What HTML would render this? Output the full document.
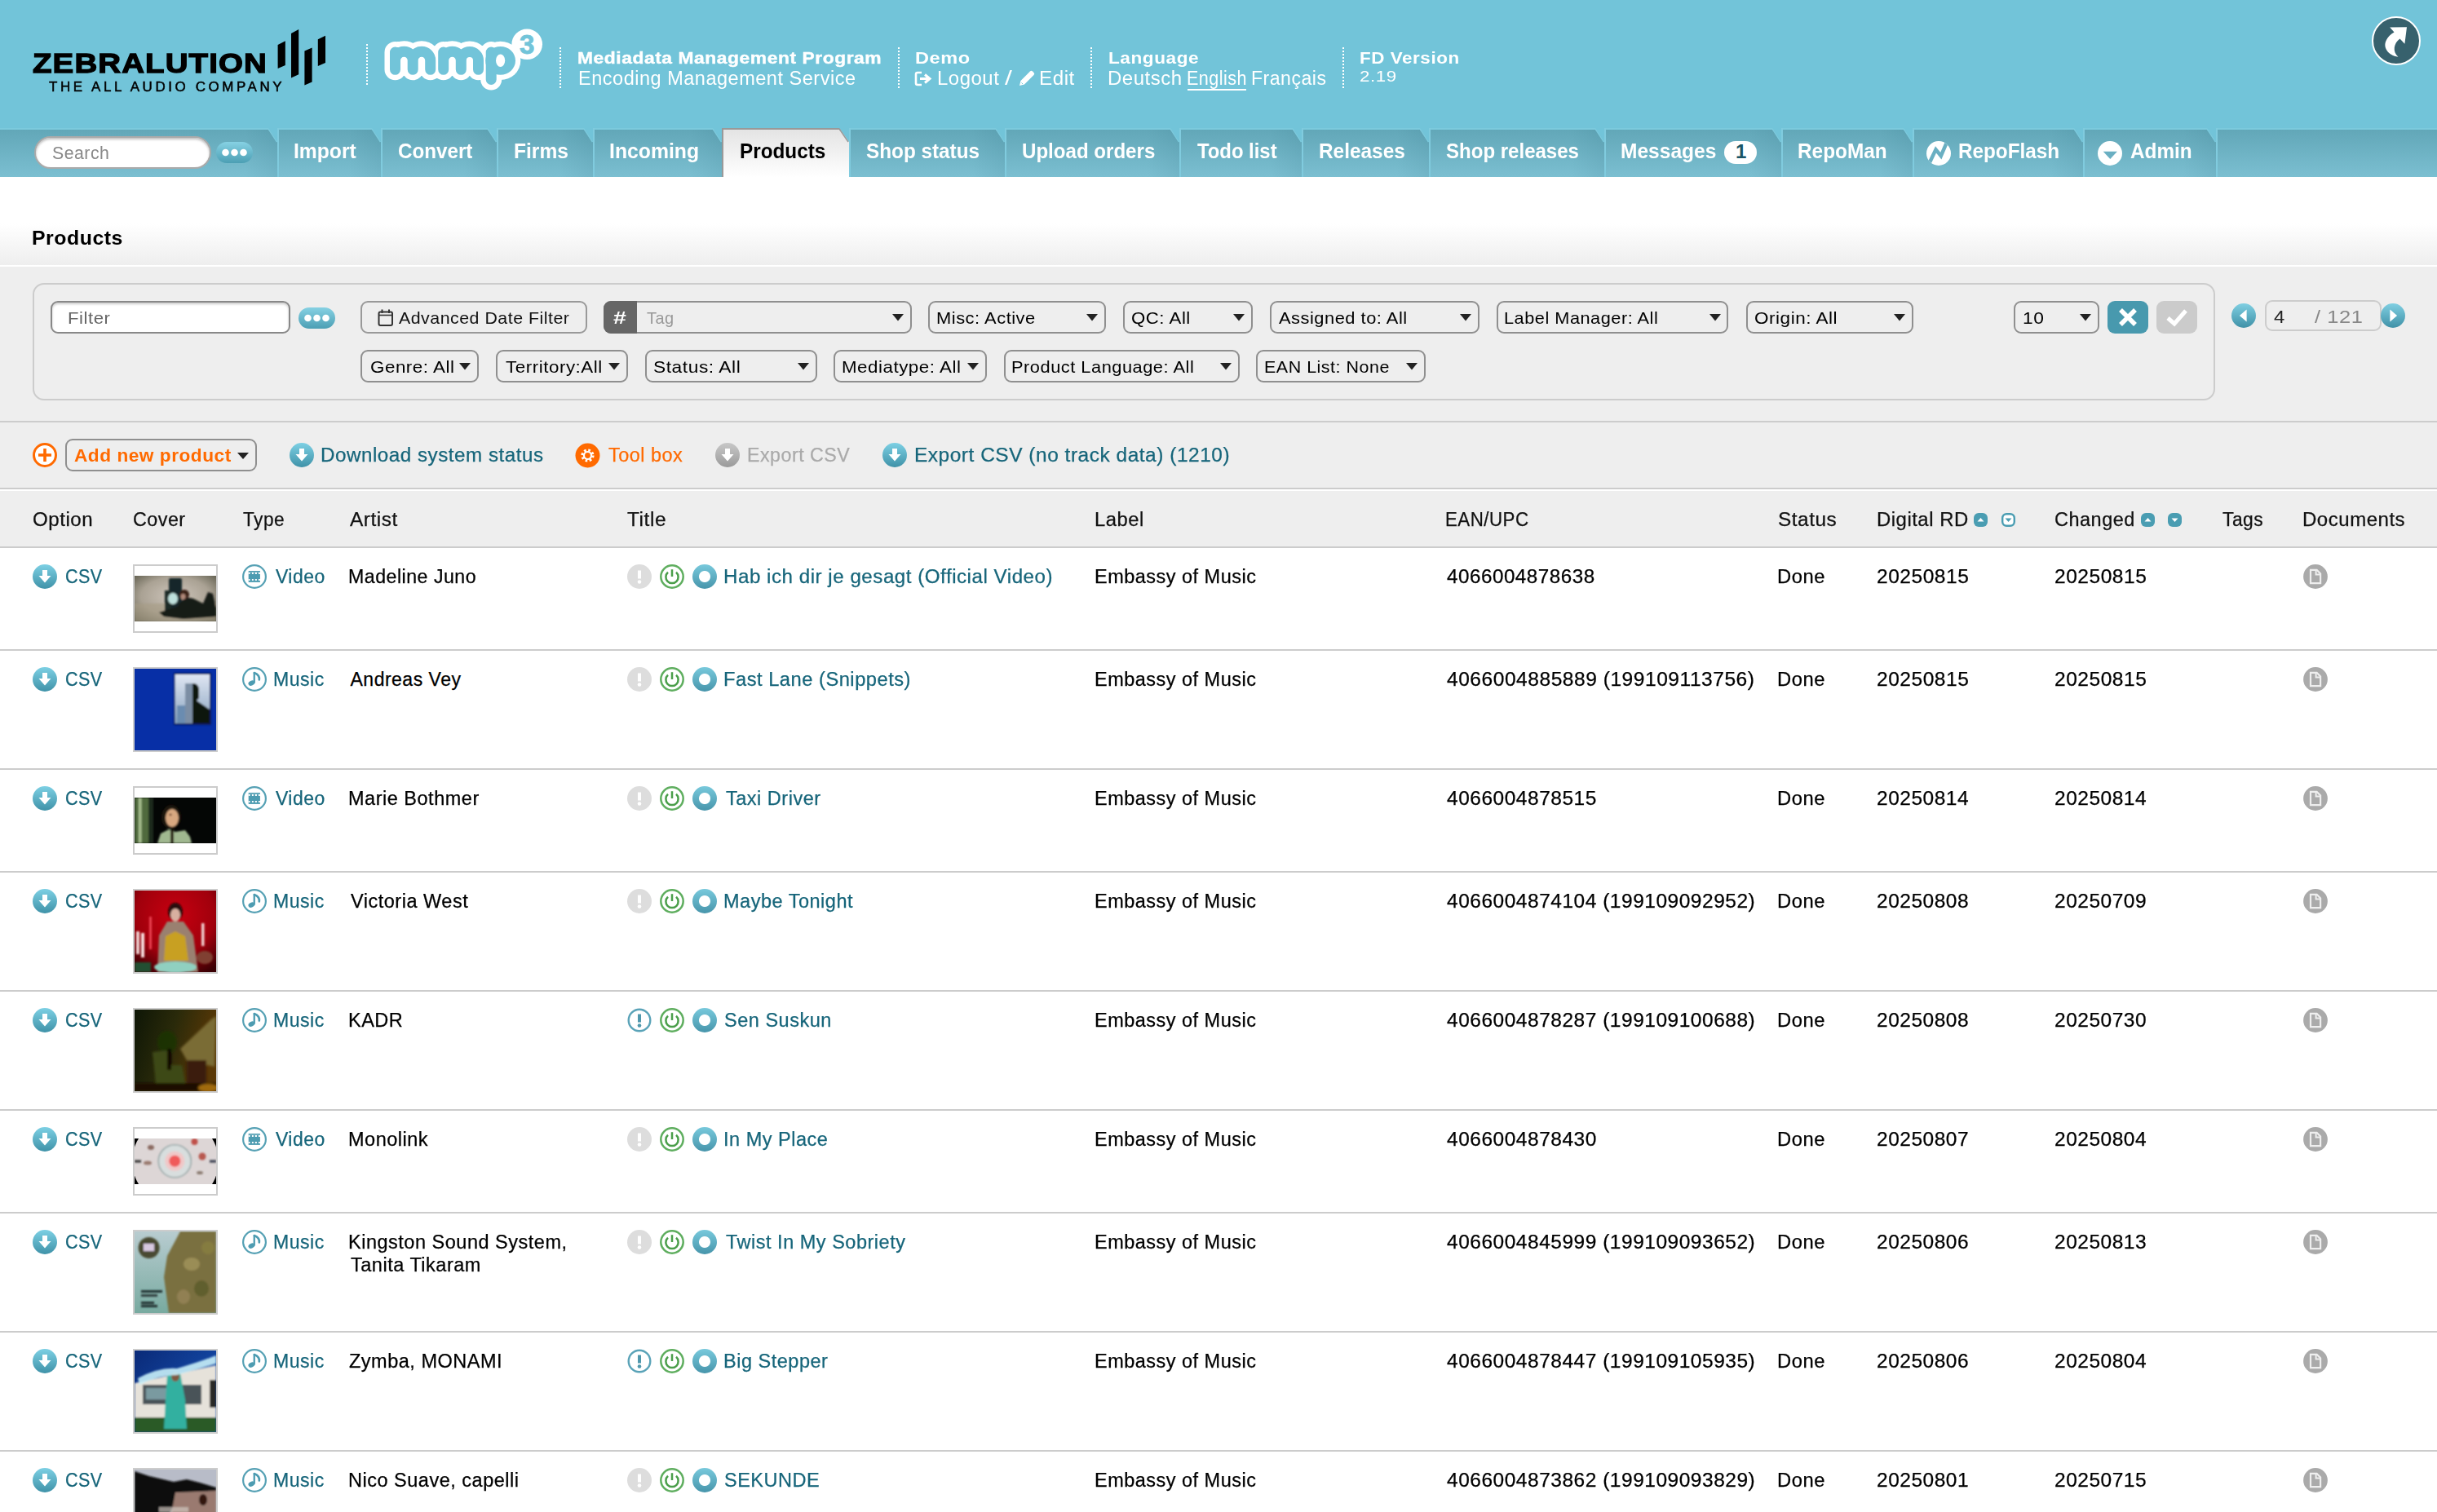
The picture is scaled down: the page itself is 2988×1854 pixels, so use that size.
<!DOCTYPE html><html><head><meta charset="utf-8"><style>
*{box-sizing:border-box}
html,body{margin:0;padding:0}
body{width:2988px;height:1854px;overflow:hidden;position:relative;background:#fff;font-family:"Liberation Sans",sans-serif}
.a{position:absolute}
.t{position:absolute;white-space:nowrap}
</style></head><body><div class="a" style="left:0px;top:0px;width:2988px;height:157px;background:#72c4d9"></div>
<div class="t" style="left:40.00px;top:60px;font-size:34px;line-height:34px;font-weight:700;color:#000;letter-spacing:1.0px;transform:scaleX(1.1310);transform-origin:0 0;-webkit-text-stroke:1.3px #000;">ZEBRALUTION</div>
<div class="t" style="left:59.50px;top:98px;font-size:17px;line-height:17px;font-weight:400;color:#000;letter-spacing:3.6px;transform:scaleX(0.9972);transform-origin:0 0;-webkit-text-stroke:0.5px #000;">THE ALL AUDIO COMPANY</div>
<svg class="a" style="left:0px;top:0px;" width="420" height="157" viewBox="0 0 420 157"><polygon points="340.6,55 349.8,50.3 349.8,80 340.6,84" fill="#000"/><polygon points="357,41 366.2,35.9 366.2,91.3 357,95.4" fill="#000"/><polygon points="373.4,62.6 382.6,58.5 382.6,100.5 373.4,104.6" fill="#000"/><polygon points="389.8,48.2 399,43.7 399,77 389.8,81" fill="#000"/></svg>
<div class="a" style="left:449px;top:54px;width:2px;height:50px;background:repeating-linear-gradient(to bottom,#fff 0,#fff 2px,transparent 2px,transparent 4px)"></div>
<div class="a" style="left:686px;top:58px;width:2px;height:50px;background:repeating-linear-gradient(to bottom,#fff 0,#fff 2px,transparent 2px,transparent 4px)"></div>
<div class="a" style="left:1101px;top:58px;width:2px;height:50px;background:repeating-linear-gradient(to bottom,#fff 0,#fff 2px,transparent 2px,transparent 4px)"></div>
<div class="a" style="left:1337px;top:58px;width:2px;height:50px;background:repeating-linear-gradient(to bottom,#fff 0,#fff 2px,transparent 2px,transparent 4px)"></div>
<div class="a" style="left:1646px;top:58px;width:2px;height:50px;background:repeating-linear-gradient(to bottom,#fff 0,#fff 2px,transparent 2px,transparent 4px)"></div>
<svg class="a" style="left:0px;top:0px;" width="700" height="157" viewBox="0 0 700 157"><circle cx="646.2" cy="54.3" r="18.8" fill="#fff"/><path d="M484.5 85.3 V64 M484.5 74 A10.85 10.85 0 0 1 506.2 74 V85.3 M506.2 74 A10.75 10.75 0 0 1 527.7 74 V85.3 M543.7 85.3 V64 M543.7 74 A10.8 10.8 0 0 1 565.3 74 V85.3 M565.3 74 A10.6 10.6 0 0 1 586.5 74 V85.3 M602.2 64 V97.5" fill="none" stroke="#fff" stroke-width="26" stroke-linecap="round" stroke-linejoin="round"/><ellipse cx="613.6" cy="74.4" rx="24.7" ry="23.7" fill="#fff"/><path d="M484.5 85.3 V64 M484.5 74 A10.85 10.85 0 0 1 506.2 74 V85.3 M506.2 74 A10.75 10.75 0 0 1 527.7 74 V85.3 M543.7 85.3 V64 M543.7 74 A10.8 10.8 0 0 1 565.3 74 V85.3 M565.3 74 A10.6 10.6 0 0 1 586.5 74 V85.3 M602.2 64 V97.5" fill="none" stroke="#72c4d9" stroke-width="13" stroke-linecap="round" stroke-linejoin="round"/><ellipse cx="613.6" cy="74.4" rx="18.4" ry="17.4" fill="#72c4d9"/><ellipse cx="613.6" cy="74.2" rx="5.6" ry="7.7" fill="#fff"/><text x="646.3" y="66.3" font-family="Liberation Sans" font-weight="700" font-size="33" fill="#72c4d9" stroke="#72c4d9" stroke-width="0.8" text-anchor="middle">3</text></svg>
<div class="t" style="left:708.42px;top:61px;font-size:20px;line-height:20px;font-weight:700;color:#fff;letter-spacing:0.5px;transform:scaleX(1.1398);transform-origin:0 0;-webkit-text-stroke:0.4px #fff;">Mediadata Management Program</div>
<div class="t" style="left:708.66px;top:85px;font-size:23px;line-height:23px;font-weight:400;color:#fff;letter-spacing:0.5px;transform:scaleX(1.0221);transform-origin:0 0;">Encoding Management Service</div>
<div class="t" style="left:1121.52px;top:61px;font-size:20px;line-height:20px;font-weight:700;color:#fff;letter-spacing:0.5px;transform:scaleX(1.1764);transform-origin:0 0;">Demo</div>
<svg class="a" style="left:1121px;top:86px;" width="24" height="22" viewBox="0 0 24 22"><path d="M9 3 H4 Q2 3 2 5 V16 Q2 18 4 18 H9" fill="none" stroke="#fff" stroke-width="2.6"/><path d="M7 10.5 H17" stroke="#fff" stroke-width="3"/><path d="M13 5.5 L19 10.5 L13 15.5" fill="none" stroke="#fff" stroke-width="3" stroke-linejoin="miter"/></svg>
<div class="t" style="left:1148.52px;top:85px;font-size:23px;line-height:23px;font-weight:400;color:#fff;letter-spacing:0.5px;transform:scaleX(1.0408);transform-origin:0 0;">Logout</div>
<div class="t" style="left:1231.70px;top:85px;font-size:23px;line-height:23px;font-weight:400;color:#fff;letter-spacing:0px;transform:scaleX(1.3833);transform-origin:0 0;">/</div>
<svg class="a" style="left:1247px;top:84px;" width="24" height="24" viewBox="0 0 24 24"><path d="M3 21 L4.5 15 L16 3.5 Q17.5 2 19 3.5 L20.5 5 Q22 6.5 20.5 8 L9 19.5 Z" fill="#fff"/><path d="M5.5 17.5 L7 19" stroke="#72c4d9" stroke-width="1"/></svg>
<div class="t" style="left:1273.90px;top:85px;font-size:23px;line-height:23px;font-weight:400;color:#fff;letter-spacing:0.5px;transform:scaleX(1.0513);transform-origin:0 0;">Edit</div>
<div class="t" style="left:1358.87px;top:61px;font-size:20px;line-height:20px;font-weight:700;color:#fff;letter-spacing:0.5px;transform:scaleX(1.1292);transform-origin:0 0;">Language</div>
<div class="t" style="left:1357.91px;top:85px;font-size:23px;line-height:23px;font-weight:400;color:#fff;letter-spacing:0.5px;transform:scaleX(1.0440);transform-origin:0 0;">Deutsch</div>
<div class="t" style="left:1454.72px;top:85px;font-size:23px;line-height:23px;font-weight:400;color:#fff;letter-spacing:0.5px;transform:scaleX(0.9387);transform-origin:0 0;">English</div>
<div class="a" style="left:1456px;top:109px;width:72px;height:2px;background:#fff"></div>
<div class="t" style="left:1533.69px;top:85px;font-size:23px;line-height:23px;font-weight:400;color:#fff;letter-spacing:0.5px;transform:scaleX(1.0034);transform-origin:0 0;">Fran&ccedil;ais</div>
<div class="t" style="left:1667.48px;top:61px;font-size:20px;line-height:20px;font-weight:700;color:#fff;letter-spacing:0.5px;transform:scaleX(1.1206);transform-origin:0 0;">FD Version</div>
<div class="t" style="left:1667.43px;top:84px;font-size:19px;line-height:19px;font-weight:400;color:#fff;letter-spacing:0.5px;transform:scaleX(1.1730);transform-origin:0 0;">2.19</div>
<svg class="a" style="left:2904px;top:16px;" width="68" height="68" viewBox="0 0 68 68"><circle cx="34" cy="34" r="29" fill="#37616d" stroke="#fff" stroke-width="2"/><path d="M26.2 17.5 L47 17.2 L44.4 37.8 L38.5 31.5 C31 37 29 47 36.4 53.8 C24 52 17 42 22 33 C24 29 27 26 31.5 23.5 Z" fill="#fff"/></svg>
<div class="a" style="left:0px;top:157px;width:2988px;height:60px;background:linear-gradient(to bottom,#7ccadd 0,#7ccadd 2px,#62a7b8 2px,#7bbfd1 100%)"></div>
<div class="a" style="left:300px;top:159px;width:40px;height:58px;background:linear-gradient(to right,rgba(0,60,80,0) 0,rgba(0,60,80,0.07) 100%)"></div>
<svg class="a" style="left:329px;top:157px;" width="11" height="18" viewBox="0 0 11 18"><polygon points="0,0 11,0 11,17" fill="#72c4d9"/><line x1="0" y1="1" x2="10.5" y2="17" stroke="#7ccadd" stroke-width="1.5"/></svg>
<div class="a" style="left:340px;top:157px;width:2px;height:60px;background:#80cbde"></div>
<div class="a" style="left:427px;top:159px;width:40px;height:58px;background:linear-gradient(to right,rgba(0,60,80,0) 0,rgba(0,60,80,0.07) 100%)"></div>
<svg class="a" style="left:456px;top:157px;" width="11" height="18" viewBox="0 0 11 18"><polygon points="0,0 11,0 11,17" fill="#72c4d9"/><line x1="0" y1="1" x2="10.5" y2="17" stroke="#7ccadd" stroke-width="1.5"/></svg>
<div class="a" style="left:467px;top:157px;width:2px;height:60px;background:#80cbde"></div>
<div class="a" style="left:569px;top:159px;width:40px;height:58px;background:linear-gradient(to right,rgba(0,60,80,0) 0,rgba(0,60,80,0.07) 100%)"></div>
<svg class="a" style="left:598px;top:157px;" width="11" height="18" viewBox="0 0 11 18"><polygon points="0,0 11,0 11,17" fill="#72c4d9"/><line x1="0" y1="1" x2="10.5" y2="17" stroke="#7ccadd" stroke-width="1.5"/></svg>
<div class="a" style="left:609px;top:157px;width:2px;height:60px;background:#80cbde"></div>
<div class="a" style="left:687px;top:159px;width:40px;height:58px;background:linear-gradient(to right,rgba(0,60,80,0) 0,rgba(0,60,80,0.07) 100%)"></div>
<svg class="a" style="left:716px;top:157px;" width="11" height="18" viewBox="0 0 11 18"><polygon points="0,0 11,0 11,17" fill="#72c4d9"/><line x1="0" y1="1" x2="10.5" y2="17" stroke="#7ccadd" stroke-width="1.5"/></svg>
<div class="a" style="left:727px;top:157px;width:2px;height:60px;background:#80cbde"></div>
<div class="a" style="left:845px;top:159px;width:40px;height:58px;background:linear-gradient(to right,rgba(0,60,80,0) 0,rgba(0,60,80,0.07) 100%)"></div>
<svg class="a" style="left:874px;top:157px;" width="11" height="18" viewBox="0 0 11 18"><polygon points="0,0 11,0 11,17" fill="#72c4d9"/><line x1="0" y1="1" x2="10.5" y2="17" stroke="#7ccadd" stroke-width="1.5"/></svg>
<div class="a" style="left:885px;top:157px;width:156px;height:60px;background:linear-gradient(to bottom,#e4e4e4 0,#f0f0f0 45%,#fff 100%);border-left:2px solid #999;border-top:2px solid #999"></div>
<svg class="a" style="left:1029px;top:157px;" width="12" height="18" viewBox="0 0 12 18"><polygon points="0,0 12,0 12,17" fill="#72c4d9"/><line x1="0" y1="1" x2="11" y2="17" stroke="#999" stroke-width="1.5"/></svg>
<div class="a" style="left:1041px;top:157px;width:2px;height:60px;background:#80cbde"></div>
<div class="a" style="left:1192px;top:159px;width:40px;height:58px;background:linear-gradient(to right,rgba(0,60,80,0) 0,rgba(0,60,80,0.07) 100%)"></div>
<svg class="a" style="left:1221px;top:157px;" width="11" height="18" viewBox="0 0 11 18"><polygon points="0,0 11,0 11,17" fill="#72c4d9"/><line x1="0" y1="1" x2="10.5" y2="17" stroke="#7ccadd" stroke-width="1.5"/></svg>
<div class="a" style="left:1232px;top:157px;width:2px;height:60px;background:#80cbde"></div>
<div class="a" style="left:1406px;top:159px;width:40px;height:58px;background:linear-gradient(to right,rgba(0,60,80,0) 0,rgba(0,60,80,0.07) 100%)"></div>
<svg class="a" style="left:1435px;top:157px;" width="11" height="18" viewBox="0 0 11 18"><polygon points="0,0 11,0 11,17" fill="#72c4d9"/><line x1="0" y1="1" x2="10.5" y2="17" stroke="#7ccadd" stroke-width="1.5"/></svg>
<div class="a" style="left:1446px;top:157px;width:2px;height:60px;background:#80cbde"></div>
<div class="a" style="left:1556px;top:159px;width:40px;height:58px;background:linear-gradient(to right,rgba(0,60,80,0) 0,rgba(0,60,80,0.07) 100%)"></div>
<svg class="a" style="left:1585px;top:157px;" width="11" height="18" viewBox="0 0 11 18"><polygon points="0,0 11,0 11,17" fill="#72c4d9"/><line x1="0" y1="1" x2="10.5" y2="17" stroke="#7ccadd" stroke-width="1.5"/></svg>
<div class="a" style="left:1596px;top:157px;width:2px;height:60px;background:#80cbde"></div>
<div class="a" style="left:1712px;top:159px;width:40px;height:58px;background:linear-gradient(to right,rgba(0,60,80,0) 0,rgba(0,60,80,0.07) 100%)"></div>
<svg class="a" style="left:1741px;top:157px;" width="11" height="18" viewBox="0 0 11 18"><polygon points="0,0 11,0 11,17" fill="#72c4d9"/><line x1="0" y1="1" x2="10.5" y2="17" stroke="#7ccadd" stroke-width="1.5"/></svg>
<div class="a" style="left:1752px;top:157px;width:2px;height:60px;background:#80cbde"></div>
<div class="a" style="left:1927px;top:159px;width:40px;height:58px;background:linear-gradient(to right,rgba(0,60,80,0) 0,rgba(0,60,80,0.07) 100%)"></div>
<svg class="a" style="left:1956px;top:157px;" width="11" height="18" viewBox="0 0 11 18"><polygon points="0,0 11,0 11,17" fill="#72c4d9"/><line x1="0" y1="1" x2="10.5" y2="17" stroke="#7ccadd" stroke-width="1.5"/></svg>
<div class="a" style="left:1967px;top:157px;width:2px;height:60px;background:#80cbde"></div>
<div class="a" style="left:2144px;top:159px;width:40px;height:58px;background:linear-gradient(to right,rgba(0,60,80,0) 0,rgba(0,60,80,0.07) 100%)"></div>
<svg class="a" style="left:2173px;top:157px;" width="11" height="18" viewBox="0 0 11 18"><polygon points="0,0 11,0 11,17" fill="#72c4d9"/><line x1="0" y1="1" x2="10.5" y2="17" stroke="#7ccadd" stroke-width="1.5"/></svg>
<div class="a" style="left:2184px;top:157px;width:2px;height:60px;background:#80cbde"></div>
<div class="a" style="left:2305px;top:159px;width:40px;height:58px;background:linear-gradient(to right,rgba(0,60,80,0) 0,rgba(0,60,80,0.07) 100%)"></div>
<svg class="a" style="left:2334px;top:157px;" width="11" height="18" viewBox="0 0 11 18"><polygon points="0,0 11,0 11,17" fill="#72c4d9"/><line x1="0" y1="1" x2="10.5" y2="17" stroke="#7ccadd" stroke-width="1.5"/></svg>
<div class="a" style="left:2345px;top:157px;width:2px;height:60px;background:#80cbde"></div>
<div class="a" style="left:2514px;top:159px;width:40px;height:58px;background:linear-gradient(to right,rgba(0,60,80,0) 0,rgba(0,60,80,0.07) 100%)"></div>
<svg class="a" style="left:2543px;top:157px;" width="11" height="18" viewBox="0 0 11 18"><polygon points="0,0 11,0 11,17" fill="#72c4d9"/><line x1="0" y1="1" x2="10.5" y2="17" stroke="#7ccadd" stroke-width="1.5"/></svg>
<div class="a" style="left:2554px;top:157px;width:2px;height:60px;background:#80cbde"></div>
<div class="a" style="left:2677px;top:159px;width:40px;height:58px;background:linear-gradient(to right,rgba(0,60,80,0) 0,rgba(0,60,80,0.07) 100%)"></div>
<svg class="a" style="left:2706px;top:157px;" width="11" height="18" viewBox="0 0 11 18"><polygon points="0,0 11,0 11,17" fill="#72c4d9"/><line x1="0" y1="1" x2="10.5" y2="17" stroke="#7ccadd" stroke-width="1.5"/></svg>
<div class="a" style="left:2717px;top:157px;width:2px;height:60px;background:#80cbde"></div>
<div class="t" style="left:360.03px;top:173px;font-size:25px;line-height:25px;font-weight:700;color:#fff;letter-spacing:0px;transform:scaleX(0.9868);transform-origin:0 0;">Import</div>
<div class="t" style="left:488.03px;top:173px;font-size:25px;line-height:25px;font-weight:700;color:#fff;letter-spacing:0px;transform:scaleX(0.9677);transform-origin:0 0;">Convert</div>
<div class="t" style="left:630.03px;top:173px;font-size:25px;line-height:25px;font-weight:700;color:#fff;letter-spacing:0px;transform:scaleX(0.9846);transform-origin:0 0;">Firms</div>
<div class="t" style="left:747.02px;top:173px;font-size:25px;line-height:25px;font-weight:700;color:#fff;letter-spacing:0px;transform:scaleX(0.9907);transform-origin:0 0;">Incoming</div>
<div class="t" style="left:906.76px;top:173px;font-size:25px;line-height:25px;font-weight:700;color:#000;letter-spacing:0px;transform:scaleX(0.9714);transform-origin:0 0;">Products</div>
<div class="t" style="left:1062.03px;top:173px;font-size:25px;line-height:25px;font-weight:700;color:#fff;letter-spacing:0px;transform:scaleX(0.9716);transform-origin:0 0;">Shop status</div>
<div class="t" style="left:1252.84px;top:173px;font-size:25px;line-height:25px;font-weight:700;color:#fff;letter-spacing:0px;transform:scaleX(0.9635);transform-origin:0 0;">Upload orders</div>
<div class="t" style="left:1467.70px;top:173px;font-size:25px;line-height:25px;font-weight:700;color:#fff;letter-spacing:0px;transform:scaleX(0.9539);transform-origin:0 0;">Todo list</div>
<div class="t" style="left:1616.55px;top:173px;font-size:25px;line-height:25px;font-weight:700;color:#fff;letter-spacing:0px;transform:scaleX(0.9762);transform-origin:0 0;">Releases</div>
<div class="t" style="left:1772.94px;top:173px;font-size:25px;line-height:25px;font-weight:700;color:#fff;letter-spacing:0px;transform:scaleX(0.9613);transform-origin:0 0;">Shop releases</div>
<div class="t" style="left:1986.74px;top:173px;font-size:25px;line-height:25px;font-weight:700;color:#fff;letter-spacing:0px;transform:scaleX(0.9819);transform-origin:0 0;">Messages</div>
<div class="t" style="left:2204.35px;top:173px;font-size:25px;line-height:25px;font-weight:700;color:#fff;letter-spacing:0px;transform:scaleX(0.9743);transform-origin:0 0;">RepoMan</div>
<div class="t" style="left:2400.66px;top:173px;font-size:25px;line-height:25px;font-weight:700;color:#fff;letter-spacing:0px;transform:scaleX(0.9710);transform-origin:0 0;">RepoFlash</div>
<div class="t" style="left:2612.03px;top:173px;font-size:25px;line-height:25px;font-weight:700;color:#fff;letter-spacing:0px;transform:scaleX(0.9733);transform-origin:0 0;">Admin</div>
<div class="a" style="left:2114px;top:173px;width:40px;height:28px;background:#fff;border-radius:14px"></div>
<div class="t" style="left:2128.00px;top:174px;font-size:24px;line-height:24px;font-weight:700;color:#1a5566;letter-spacing:0px;">1</div>
<svg class="a" style="left:2360px;top:172px;" width="34" height="32" viewBox="0 0 34 32"><defs><clipPath id="rfc"><circle cx="17" cy="16" r="15"/></clipPath></defs><circle cx="17" cy="16" r="15" fill="#fff"/><polyline clip-path="url(#rfc)" points="5.7,27.8 13.5,11.4 19.8,19.2 26.8,2.8" fill="none" stroke="#6aafc2" stroke-width="4.5" stroke-linejoin="miter"/></svg>
<svg class="a" style="left:2570px;top:172px;" width="34" height="32" viewBox="0 0 34 32"><circle cx="17" cy="16" r="15" fill="#fff"/><path d="M8.7 13.7 L25.9 13.7 L17.3 23.1 Z" fill="#6aafc2"/></svg>
<div class="a" style="left:42px;top:167px;width:217px;height:40px;background:#fff;border:2px solid #aaa;border-radius:20px;box-shadow:inset 0 2px 3px rgba(0,0,0,0.25)"></div>
<div class="t" style="left:63.63px;top:177px;font-size:22px;line-height:22px;font-weight:400;color:#888;letter-spacing:0.5px;transform:scaleX(0.9671);transform-origin:0 0;">Search</div>
<div class="a" style="left:265px;top:174px;width:45px;height:26px;border-radius:13px;background:linear-gradient(to bottom,#86d1e3,#4c9fb4)"><svg width="45" height="26" style="position:absolute;left:0;top:0"><circle cx="11.5" cy="13.0" r="4.3" fill="#fff"/><circle cx="22.5" cy="13.0" r="4.3" fill="#fff"/><circle cx="33.5" cy="13.0" r="4.3" fill="#fff"/></svg></div>
<div class="a" style="left:0px;top:217px;width:2988px;height:108px;background:linear-gradient(to bottom,#fff 0,#fff 53%,#eeeeee 100%)"></div>
<div class="t" style="left:38.54px;top:281px;font-size:23px;line-height:23px;font-weight:700;color:#000;letter-spacing:0.5px;transform:scaleX(1.0800);transform-origin:0 0;">Products</div>
<div class="a" style="left:0px;top:325px;width:2988px;height:2px;background:#fff"></div>
<div class="a" style="left:0px;top:327px;width:2988px;height:190px;background:#eee"></div>
<div class="a" style="left:40px;top:347px;width:2676px;height:144px;border:2px solid #ccc;border-radius:14px"></div>
<div class="a" style="left:62px;top:369px;width:294px;height:40px;background:#fff;border:2px solid #888;border-radius:9px;box-shadow:inset 0 2px 3px rgba(0,0,0,0.2)"></div>
<div class="t" style="left:83.09px;top:379px;font-size:21px;line-height:21px;font-weight:400;color:#666;letter-spacing:0.5px;transform:scaleX(1.0553);transform-origin:0 0;">Filter</div>
<div class="a" style="left:366px;top:377px;width:45px;height:26px;border-radius:13px;background:linear-gradient(to bottom,#86d1e3,#4c9fb4)"><svg width="45" height="26" style="position:absolute;left:0;top:0"><circle cx="11.5" cy="13.0" r="4.3" fill="#fff"/><circle cx="22.5" cy="13.0" r="4.3" fill="#fff"/><circle cx="33.5" cy="13.0" r="4.3" fill="#fff"/></svg></div>
<div class="a" style="left:442px;top:369px;width:278px;height:40px;border:2px solid #999;border-radius:9px"></div>
<svg class="a" style="left:462px;top:378px;" width="22" height="24" viewBox="0 0 22 24"><rect x="2.5" y="4.5" width="16.5" height="16.5" rx="2" fill="none" stroke="#333" stroke-width="2"/><line x1="2.5" y1="8.5" x2="19" y2="8.5" stroke="#333" stroke-width="1.6"/><line x1="6.5" y1="1.5" x2="6.5" y2="6" stroke="#333" stroke-width="2"/><line x1="15" y1="1.5" x2="15" y2="6" stroke="#333" stroke-width="2"/></svg>
<div class="t" style="left:489.40px;top:379px;font-size:21px;line-height:21px;font-weight:400;color:#111;letter-spacing:0.5px;transform:scaleX(1.0161);transform-origin:0 0;">Advanced Date Filter</div>
<div class="a" style="left:740px;top:369px;width:378px;height:40px;border:2px solid #8f8f8f;border-radius:9px;background:#eee"></div>
<div class="a" style="left:740px;top:369px;width:41px;height:40px;background:#666;border-radius:9px 0 0 9px"></div>
<div class="t" style="left:751.50px;top:379px;font-size:22px;line-height:22px;font-weight:700;color:#fff;letter-spacing:0px;transform:scaleX(1.2917);transform-origin:0 0;">#</div>
<div class="t" style="left:792.50px;top:379px;font-size:21px;line-height:21px;font-weight:400;color:#999;letter-spacing:0.5px;transform:scaleX(0.9500);transform-origin:0 0;">Tag</div>
<svg class="a" style="left:1094px;top:385px;" width="14" height="9" viewBox="0 0 14 9"><polygon points="0,0 14,0 7,8.5" fill="#222"/></svg>
<div class="a" style="left:1138px;top:369px;width:218px;height:40px;border:2px solid #8f8f8f;border-radius:9px;background:#eee"></div>
<div class="t" style="left:1148.32px;top:379px;font-size:21px;line-height:21px;font-weight:400;color:#000;letter-spacing:0.5px;transform:scaleX(1.0421);transform-origin:0 0;">Misc: Active</div>
<svg class="a" style="left:1332px;top:385px;" width="14" height="9" viewBox="0 0 14 9"><polygon points="0,0 14,0 7,8.5" fill="#222"/></svg>
<div class="a" style="left:1377px;top:369px;width:159px;height:40px;border:2px solid #8f8f8f;border-radius:9px;background:#eee"></div>
<div class="t" style="left:1386.84px;top:379px;font-size:21px;line-height:21px;font-weight:400;color:#000;letter-spacing:0.5px;transform:scaleX(1.0576);transform-origin:0 0;">QC: All</div>
<svg class="a" style="left:1512px;top:385px;" width="14" height="9" viewBox="0 0 14 9"><polygon points="0,0 14,0 7,8.5" fill="#222"/></svg>
<div class="a" style="left:1557px;top:369px;width:257px;height:40px;border:2px solid #8f8f8f;border-radius:9px;background:#eee"></div>
<div class="t" style="left:1568.00px;top:379px;font-size:21px;line-height:21px;font-weight:400;color:#000;letter-spacing:0.5px;transform:scaleX(1.0400);transform-origin:0 0;">Assigned to: All</div>
<svg class="a" style="left:1790px;top:385px;" width="14" height="9" viewBox="0 0 14 9"><polygon points="0,0 14,0 7,8.5" fill="#222"/></svg>
<div class="a" style="left:1835px;top:369px;width:284px;height:40px;border:2px solid #8f8f8f;border-radius:9px;background:#eee"></div>
<div class="t" style="left:1844.43px;top:379px;font-size:21px;line-height:21px;font-weight:400;color:#000;letter-spacing:0.5px;transform:scaleX(1.0346);transform-origin:0 0;">Label Manager: All</div>
<svg class="a" style="left:2096px;top:385px;" width="14" height="9" viewBox="0 0 14 9"><polygon points="0,0 14,0 7,8.5" fill="#222"/></svg>
<div class="a" style="left:2141px;top:369px;width:205px;height:40px;border:2px solid #8f8f8f;border-radius:9px;background:#eee"></div>
<div class="t" style="left:2150.93px;top:379px;font-size:21px;line-height:21px;font-weight:400;color:#000;letter-spacing:0.5px;transform:scaleX(1.0710);transform-origin:0 0;">Origin: All</div>
<svg class="a" style="left:2322px;top:385px;" width="14" height="9" viewBox="0 0 14 9"><polygon points="0,0 14,0 7,8.5" fill="#222"/></svg>
<div class="a" style="left:2469px;top:369px;width:105px;height:40px;border:2px solid #8f8f8f;border-radius:9px;background:#eee"></div>
<div class="t" style="left:2479.63px;top:379px;font-size:21px;line-height:21px;font-weight:400;color:#000;letter-spacing:0.5px;transform:scaleX(1.0857);transform-origin:0 0;">10</div>
<svg class="a" style="left:2550px;top:385px;" width="14" height="9" viewBox="0 0 14 9"><polygon points="0,0 14,0 7,8.5" fill="#222"/></svg>
<div class="a" style="left:2584px;top:369px;width:50px;height:40px;background:#4899ae;border-radius:9px"></div>
<svg class="a" style="left:2584px;top:369px;" width="50" height="40" viewBox="0 0 50 40"><path d="M16 11 L34 29 M34 11 L16 29" stroke="#fff" stroke-width="5.5" stroke-linecap="butt"/></svg>
<div class="a" style="left:2644px;top:369px;width:50px;height:40px;background:#cbcbcb;border-radius:9px"></div>
<svg class="a" style="left:2644px;top:369px;" width="50" height="40" viewBox="0 0 50 40"><path d="M14 21 L22 28 L36 12" fill="none" stroke="#fff" stroke-width="5"/></svg>
<div class="a" style="left:2736px;top:372px;width:30px;height:30px;border-radius:50%;background:linear-gradient(to bottom,#80cfe2,#3f91a7)"></div>
<svg class="a" style="left:2736px;top:372px;" width="30" height="30" viewBox="0 0 30 30"><polygon points="18.6,7.5 18.6,22.5 9.9,15.0" fill="#fff"/></svg>
<div class="a" style="left:2777px;top:368px;width:143px;height:38px;border:2px solid #ccc;border-radius:9px"></div>
<div class="t" style="left:2788.00px;top:378px;font-size:22px;line-height:22px;font-weight:400;color:#222;letter-spacing:0px;transform:scaleX(1.0833);transform-origin:0 0;">4</div>
<div class="t" style="left:2837.80px;top:378px;font-size:22px;line-height:22px;font-weight:400;color:#888;letter-spacing:0.5px;transform:scaleX(1.1580);transform-origin:0 0;">/ 121</div>
<div class="a" style="left:2919px;top:372px;width:30px;height:30px;border-radius:50%;background:linear-gradient(to bottom,#80cfe2,#3f91a7)"></div>
<svg class="a" style="left:2919px;top:372px;" width="30" height="30" viewBox="0 0 30 30"><polygon points="11.4,7.5 11.4,22.5 20.1,15.0" fill="#fff"/></svg>
<div class="a" style="left:442px;top:429px;width:145px;height:40px;border:2px solid #8f8f8f;border-radius:9px;background:#eee"></div>
<div class="t" style="left:453.54px;top:439px;font-size:21px;line-height:21px;font-weight:400;color:#000;letter-spacing:0.5px;transform:scaleX(1.0649);transform-origin:0 0;">Genre: All</div>
<svg class="a" style="left:563px;top:445px;" width="14" height="9" viewBox="0 0 14 9"><polygon points="0,0 14,0 7,8.5" fill="#222"/></svg>
<div class="a" style="left:608px;top:429px;width:162px;height:40px;border:2px solid #8f8f8f;border-radius:9px;background:#eee"></div>
<div class="t" style="left:620.00px;top:439px;font-size:21px;line-height:21px;font-weight:400;color:#000;letter-spacing:0.5px;transform:scaleX(1.0655);transform-origin:0 0;">Territory:All</div>
<svg class="a" style="left:746px;top:445px;" width="14" height="9" viewBox="0 0 14 9"><polygon points="0,0 14,0 7,8.5" fill="#222"/></svg>
<div class="a" style="left:791px;top:429px;width:211px;height:40px;border:2px solid #8f8f8f;border-radius:9px;background:#eee"></div>
<div class="t" style="left:801.32px;top:439px;font-size:21px;line-height:21px;font-weight:400;color:#000;letter-spacing:0.5px;transform:scaleX(1.0844);transform-origin:0 0;">Status: All</div>
<svg class="a" style="left:978px;top:445px;" width="14" height="9" viewBox="0 0 14 9"><polygon points="0,0 14,0 7,8.5" fill="#222"/></svg>
<div class="a" style="left:1022px;top:429px;width:188px;height:40px;border:2px solid #8f8f8f;border-radius:9px;background:#eee"></div>
<div class="t" style="left:1032.47px;top:439px;font-size:21px;line-height:21px;font-weight:400;color:#000;letter-spacing:0.5px;transform:scaleX(1.0627);transform-origin:0 0;">Mediatype: All</div>
<svg class="a" style="left:1186px;top:445px;" width="14" height="9" viewBox="0 0 14 9"><polygon points="0,0 14,0 7,8.5" fill="#222"/></svg>
<div class="a" style="left:1231px;top:429px;width:289px;height:40px;border:2px solid #8f8f8f;border-radius:9px;background:#eee"></div>
<div class="t" style="left:1240.32px;top:439px;font-size:21px;line-height:21px;font-weight:400;color:#000;letter-spacing:0.5px;transform:scaleX(1.0382);transform-origin:0 0;">Product Language: All</div>
<svg class="a" style="left:1496px;top:445px;" width="14" height="9" viewBox="0 0 14 9"><polygon points="0,0 14,0 7,8.5" fill="#222"/></svg>
<div class="a" style="left:1540px;top:429px;width:208px;height:40px;border:2px solid #8f8f8f;border-radius:9px;background:#eee"></div>
<div class="t" style="left:1550.26px;top:439px;font-size:21px;line-height:21px;font-weight:400;color:#000;letter-spacing:0.5px;transform:scaleX(1.0218);transform-origin:0 0;">EAN List: None</div>
<svg class="a" style="left:1724px;top:445px;" width="14" height="9" viewBox="0 0 14 9"><polygon points="0,0 14,0 7,8.5" fill="#222"/></svg>
<div class="a" style="left:0px;top:516px;width:2988px;height:2px;background:#ccc"></div>
<div class="a" style="left:0px;top:518px;width:2988px;height:81px;background:#eee"></div>
<svg class="a" style="left:39px;top:542px;" width="32" height="32" viewBox="0 0 32 32"><circle cx="16" cy="16" r="13.5" fill="#fff" stroke="#ff6a00" stroke-width="3"/><path d="M16 8 V24 M8 16 H24" stroke="#ff6a00" stroke-width="3.6"/></svg>
<div class="a" style="left:80px;top:538px;width:235px;height:40px;border:2px solid #8f8f8f;border-radius:9px"></div>
<div class="t" style="left:91.27px;top:548px;font-size:22px;line-height:22px;font-weight:700;color:#ff6a00;letter-spacing:0.5px;transform:scaleX(1.0297);transform-origin:0 0;">Add new product</div>
<svg class="a" style="left:291px;top:555px;" width="14" height="9" viewBox="0 0 14 9"><polygon points="0,0 14,0 7,8" fill="#222"/></svg>
<div class="a" style="left:355px;top:543px;width:30px;height:30px;border-radius:50%;background:linear-gradient(to bottom,#7dd0e4,#3f92a8)"></div>
<svg class="a" style="left:355px;top:543px;" width="30" height="30" viewBox="0 0 30 30"><path d="M12 7 H18 V14 H22.5 L15 22.5 L7.5 14 H12 Z" fill="#fff"/></svg>
<div class="t" style="left:393.30px;top:547px;font-size:23px;line-height:23px;font-weight:400;color:#16657a;letter-spacing:0.5px;transform:scaleX(1.0510);transform-origin:0 0;-webkit-text-stroke:0.25px currentColor;">Download system status</div>
<svg class="a" style="left:705px;top:543px;" width="31" height="31" viewBox="0 0 31 31"><circle cx="15.5" cy="15.5" r="15" fill="#ff6a00"/><circle cx="15.5" cy="15.5" r="6.5" fill="none" stroke="#fff" stroke-width="3.2" stroke-dasharray="2.6 2.5"/><circle cx="15.5" cy="15.5" r="4.5" fill="none" stroke="#fff" stroke-width="2.2"/></svg>
<div class="t" style="left:746.20px;top:547px;font-size:23px;line-height:23px;font-weight:400;color:#ff6a00;letter-spacing:0.5px;transform:scaleX(1.0180);transform-origin:0 0;-webkit-text-stroke:0.25px currentColor;">Tool box</div>
<div class="a" style="left:877px;top:543px;width:30px;height:30px;border-radius:50%;background:linear-gradient(to bottom,#c8c8c8,#9a9a9a)"></div>
<svg class="a" style="left:877px;top:543px;" width="30" height="30" viewBox="0 0 30 30"><path d="M12 7 H18 V14 H22.5 L15 22.5 L7.5 14 H12 Z" fill="#fff"/></svg>
<div class="t" style="left:915.88px;top:547px;font-size:23px;line-height:23px;font-weight:400;color:#aaa;letter-spacing:0.5px;transform:scaleX(1.0089);transform-origin:0 0;-webkit-text-stroke:0.25px currentColor;">Export CSV</div>
<div class="a" style="left:1082px;top:543px;width:30px;height:30px;border-radius:50%;background:linear-gradient(to bottom,#7dd0e4,#3f92a8)"></div>
<svg class="a" style="left:1082px;top:543px;" width="30" height="30" viewBox="0 0 30 30"><path d="M12 7 H18 V14 H22.5 L15 22.5 L7.5 14 H12 Z" fill="#fff"/></svg>
<div class="t" style="left:1120.87px;top:547px;font-size:23px;line-height:23px;font-weight:400;color:#16657a;letter-spacing:0.5px;transform:scaleX(1.0628);transform-origin:0 0;-webkit-text-stroke:0.25px currentColor;">Export CSV (no track data) (1210)</div>
<div class="a" style="left:0px;top:598px;width:2988px;height:2px;background:#ccc"></div>
<div class="a" style="left:0px;top:600px;width:2988px;height:2px;background:#fff"></div>
<div class="a" style="left:0px;top:602px;width:2988px;height:68px;background:#eee"></div>
<div class="a" style="left:0px;top:670px;width:2988px;height:2px;background:#ccc"></div>
<div class="t" style="left:39.75px;top:626px;font-size:23px;line-height:23px;font-weight:400;color:#111;letter-spacing:0.5px;transform:scaleX(1.0471);transform-origin:0 0;-webkit-text-stroke:0.25px currentColor;">Option</div>
<div class="t" style="left:162.59px;top:626px;font-size:23px;line-height:23px;font-weight:400;color:#111;letter-spacing:0.5px;transform:scaleX(1.0113);transform-origin:0 0;-webkit-text-stroke:0.25px currentColor;">Cover</div>
<div class="t" style="left:297.60px;top:626px;font-size:23px;line-height:23px;font-weight:400;color:#111;letter-spacing:0.5px;transform:scaleX(0.9843);transform-origin:0 0;-webkit-text-stroke:0.25px currentColor;">Type</div>
<div class="t" style="left:428.90px;top:626px;font-size:23px;line-height:23px;font-weight:400;color:#111;letter-spacing:0.5px;transform:scaleX(1.0618);transform-origin:0 0;-webkit-text-stroke:0.25px currentColor;">Artist</div>
<div class="t" style="left:768.70px;top:626px;font-size:23px;line-height:23px;font-weight:400;color:#111;letter-spacing:0.5px;transform:scaleX(1.0659);transform-origin:0 0;-webkit-text-stroke:0.25px currentColor;">Title</div>
<div class="t" style="left:1342.23px;top:626px;font-size:23px;line-height:23px;font-weight:400;color:#111;letter-spacing:0.5px;transform:scaleX(1.0327);transform-origin:0 0;-webkit-text-stroke:0.25px currentColor;">Label</div>
<div class="t" style="left:1771.76px;top:626px;font-size:23px;line-height:23px;font-weight:400;color:#111;letter-spacing:0.5px;transform:scaleX(0.9689);transform-origin:0 0;-webkit-text-stroke:0.25px currentColor;">EAN/UPC</div>
<div class="t" style="left:2180.14px;top:626px;font-size:23px;line-height:23px;font-weight:400;color:#111;letter-spacing:0.5px;transform:scaleX(1.0591);transform-origin:0 0;-webkit-text-stroke:0.25px currentColor;">Status</div>
<div class="t" style="left:2300.62px;top:626px;font-size:23px;line-height:23px;font-weight:400;color:#111;letter-spacing:0.5px;transform:scaleX(1.0381);transform-origin:0 0;-webkit-text-stroke:0.25px currentColor;">Digital RD</div>
<div class="t" style="left:2519.28px;top:626px;font-size:23px;line-height:23px;font-weight:400;color:#111;letter-spacing:0.5px;transform:scaleX(1.0202);transform-origin:0 0;-webkit-text-stroke:0.25px currentColor;">Changed</div>
<div class="t" style="left:2724.50px;top:626px;font-size:23px;line-height:23px;font-weight:400;color:#111;letter-spacing:0.5px;transform:scaleX(0.9918);transform-origin:0 0;-webkit-text-stroke:0.25px currentColor;">Tags</div>
<div class="t" style="left:2822.51px;top:626px;font-size:23px;line-height:23px;font-weight:400;color:#111;letter-spacing:0.5px;transform:scaleX(1.0441);transform-origin:0 0;-webkit-text-stroke:0.25px currentColor;">Documents</div>
<svg class="a" style="left:2420px;top:629px;" width="17" height="17" viewBox="0 0 17 17"><rect x="0" y="0" width="17" height="17" rx="6" fill="#4a9db2"/><polygon points="4.5,10.5 12.5,10.5 8.5,6" fill="#fff"/></svg>
<svg class="a" style="left:2454px;top:629px;" width="17" height="17" viewBox="0 0 17 17"><rect x="1.2" y="1.2" width="14.6" height="14.6" rx="5" fill="#fff" stroke="#4a9db2" stroke-width="2.4"/><polygon points="4.5,6.5 12.5,6.5 8.5,11" fill="#4a9db2"/></svg>
<svg class="a" style="left:2625px;top:629px;" width="17" height="17" viewBox="0 0 17 17"><rect x="0" y="0" width="17" height="17" rx="6" fill="#4a9db2"/><polygon points="4.5,10.5 12.5,10.5 8.5,6" fill="#fff"/></svg>
<svg class="a" style="left:2658px;top:629px;" width="17" height="17" viewBox="0 0 17 17"><rect x="0" y="0" width="17" height="17" rx="6" fill="#4a9db2"/><polygon points="4.5,6.5 12.5,6.5 8.5,11" fill="#fff"/></svg>
<div class="a" style="left:40px;top:692px;width:30px;height:30px;border-radius:50%;background:linear-gradient(to bottom,#7dd0e4,#3f92a8)"></div>
<svg class="a" style="left:40px;top:692px;" width="30" height="30" viewBox="0 0 30 30"><path d="M12 7 H18 V14 H22.5 L15 22.5 L7.5 14 H12 Z" fill="#fff"/></svg>
<div class="t" style="left:79.96px;top:696px;font-size:23px;line-height:23px;font-weight:400;color:#16657a;letter-spacing:0.5px;transform:scaleX(0.9362);transform-origin:0 0;-webkit-text-stroke:0.25px currentColor;">CSV</div>
<div class="a" style="left:163px;top:692px;width:104px;height:84px;border:2px solid #ccc;background:#fff"></div>
<svg class="a" style="left:165px;top:706px;" width="100" height="56" viewBox="0 0 100 56"><defs><filter id="bl1" x="-10%" y="-10%" width="120%" height="120%"><feGaussianBlur stdDeviation="1.2"/></filter><radialGradient id="g1" cx="50%" cy="45%" r="70%"><stop offset="0" stop-color="#cfc6bc"/><stop offset="0.6" stop-color="#aaa294"/><stop offset="1" stop-color="#5e5c4c"/></radialGradient></defs><rect width="100" height="56" fill="url(#g1)"/><g filter="url(#bl1)"><rect x="0" y="34" width="100" height="22" fill="#a69c86" opacity="0.6"/><rect x="42" y="3" width="16" height="40" rx="2" fill="#17272a"/><rect x="37" y="18" width="8" height="25" fill="#1e2a26"/><ellipse cx="47" cy="28" rx="6" ry="7" fill="#bfe0dc"/><path d="M30 45 L52 38 L62 26 L72 28 L84 34 L90 20 L96 22 L100 40 L100 50 L60 53 L36 50 Z" fill="#181a16"/><ellipse cx="61" cy="23" rx="6" ry="6" fill="#3a2018"/><ellipse cx="59.5" cy="25.5" rx="3" ry="3.5" fill="#b08878"/></g></svg>
<svg class="a" style="left:297px;top:692px;" width="30" height="30" viewBox="0 0 30 30"><circle cx="15" cy="15" r="13.9" fill="#fff" stroke="#4d9cb1" stroke-width="2.2" opacity="0.95"/><rect x="7.7" y="8" width="14.2" height="13.9" fill="#4d9cb1"/><rect x="11.9" y="10" width="1.9" height="2" fill="#fff"/><rect x="15.8" y="10" width="2.1" height="2" fill="#fff"/><rect x="11.9" y="18" width="1.9" height="1.9" fill="#fff"/><rect x="15.8" y="18" width="2.1" height="1.9" fill="#fff"/><rect x="7.7" y="10" width="1.8" height="2" fill="#fff"/><rect x="19.9" y="10" width="2" height="2" fill="#fff"/><rect x="7.7" y="18" width="1.8" height="1.9" fill="#fff"/><rect x="19.9" y="18" width="2" height="1.9" fill="#fff"/><rect x="7.7" y="9.7" width="14.2" height="0.3" fill="#fff"/></svg>
<div class="t" style="left:337.50px;top:696px;font-size:23px;line-height:23px;font-weight:400;color:#16657a;letter-spacing:0.5px;transform:scaleX(0.9967);transform-origin:0 0;-webkit-text-stroke:0.25px currentColor;">Video</div>
<div class="t" style="left:427.49px;top:696px;font-size:23px;line-height:23px;font-weight:400;color:#000;letter-spacing:0.5px;transform:scaleX(1.0065);transform-origin:0 0;-webkit-text-stroke:0.25px currentColor;">Madeline Juno</div>
<svg class="a" style="left:769px;top:692px;" width="30" height="30" viewBox="0 0 30 30"><circle cx="15" cy="15" r="15" fill="#ddd"/><rect x="13" y="7.5" width="4" height="10" fill="#fff"/><circle cx="15" cy="21.5" r="2.3" fill="#fff"/></svg>
<svg class="a" style="left:809px;top:692px;" width="30" height="30" viewBox="0 0 30 30"><circle cx="15" cy="15" r="13.7" fill="#fff" stroke="#5fae5f" stroke-width="2.5"/><path d="M10 9.8 A7.6 7.6 0 1 0 20 9.8" fill="none" stroke="#4a9e4a" stroke-width="2.5"/><line x1="15" y1="6.2" x2="15" y2="15" stroke="#4a9e4a" stroke-width="2.5"/></svg>
<div class="a" style="left:849px;top:692px;width:30px;height:30px;border-radius:50%;background:radial-gradient(circle at 50% 50%,#fff 0,#fff 6.5px,transparent 7.5px),linear-gradient(to bottom,#78c9dc,#4795ab)"></div>
<div class="t" style="left:887.40px;top:696px;font-size:23px;line-height:23px;font-weight:400;color:#16657a;letter-spacing:0.5px;transform:scaleX(1.0493);transform-origin:0 0;-webkit-text-stroke:0.25px currentColor;">Hab ich dir je gesagt (Official Video)</div>
<div class="t" style="left:1341.96px;top:696px;font-size:23px;line-height:23px;font-weight:400;color:#000;letter-spacing:0.5px;transform:scaleX(1.0193);transform-origin:0 0;-webkit-text-stroke:0.25px currentColor;">Embassy of Music</div>
<div class="t" style="left:1773.50px;top:696px;font-size:23px;line-height:23px;font-weight:400;color:#000;letter-spacing:0.5px;transform:scaleX(1.0517);transform-origin:0 0;-webkit-text-stroke:0.25px currentColor;">4066004878638</div>
<div class="t" style="left:2179.43px;top:696px;font-size:23px;line-height:23px;font-weight:400;color:#000;letter-spacing:0.5px;transform:scaleX(1.0333);transform-origin:0 0;-webkit-text-stroke:0.25px currentColor;">Done</div>
<div class="t" style="left:2301.43px;top:696px;font-size:23px;line-height:23px;font-weight:400;color:#000;letter-spacing:0.5px;transform:scaleX(1.0663);transform-origin:0 0;-webkit-text-stroke:0.25px currentColor;">20250815</div>
<div class="t" style="left:2519.43px;top:696px;font-size:23px;line-height:23px;font-weight:400;color:#000;letter-spacing:0.5px;transform:scaleX(1.0663);transform-origin:0 0;-webkit-text-stroke:0.25px currentColor;">20250815</div>
<svg class="a" style="left:2824px;top:692px;" width="30" height="30" viewBox="0 0 30 30"><circle cx="15" cy="15" r="14.9" fill="#aaa"/><path d="M9 6.9 H16.6 L21.1 11.4 V23.1 H9 Z" fill="none" stroke="#eee" stroke-width="2.2" stroke-linejoin="miter"/><path d="M15.6 7 V12.4 H21" fill="none" stroke="#eee" stroke-width="2"/></svg>
<div class="a" style="left:0px;top:796px;width:2988px;height:2px;background:#ccc"></div>
<div class="a" style="left:40px;top:818px;width:30px;height:30px;border-radius:50%;background:linear-gradient(to bottom,#7dd0e4,#3f92a8)"></div>
<svg class="a" style="left:40px;top:818px;" width="30" height="30" viewBox="0 0 30 30"><path d="M12 7 H18 V14 H22.5 L15 22.5 L7.5 14 H12 Z" fill="#fff"/></svg>
<div class="t" style="left:79.96px;top:822px;font-size:23px;line-height:23px;font-weight:400;color:#16657a;letter-spacing:0.5px;transform:scaleX(0.9362);transform-origin:0 0;-webkit-text-stroke:0.25px currentColor;">CSV</div>
<div class="a" style="left:163px;top:818px;width:104px;height:104px;border:2px solid #ccc;background:#fff"></div>
<svg class="a" style="left:165px;top:820px;overflow:hidden;" width="100" height="100" viewBox="0 0 100 100"><defs><filter id="bl2" x="-10%" y="-10%" width="120%" height="120%"><feGaussianBlur stdDeviation="0.9"/></filter><linearGradient id="g2" x1="0" y1="0" x2="0" y2="1"><stop offset="0" stop-color="#dfe6f2"/><stop offset="1" stop-color="#8aa4c0"/></linearGradient></defs><rect width="100" height="100" fill="#072fa6"/><g filter="url(#bl2)"><rect x="48" y="5" width="46" height="64" fill="#0a1e60"/><rect x="49.5" y="7" width="42.5" height="60" fill="url(#g2)"/><rect x="62" y="18" width="10" height="49" fill="#7c8ea4"/><rect x="52" y="45" width="10" height="22" fill="#6a8cb0"/><path d="M71 18 Q77 17 79 24 L79 36 L76 39 L92 50 L92 67 L71 67 Z" fill="#0a1410"/></g></svg>
<svg class="a" style="left:297px;top:818px;" width="30" height="30" viewBox="0 0 30 30"><circle cx="15" cy="15" r="13.9" fill="#fff" stroke="#4d9cb1" stroke-width="2.2" opacity="0.95"/><rect x="13.6" y="6.5" width="2.3" height="13" fill="#4d9cb1"/><ellipse cx="11.4" cy="19.6" rx="4.1" ry="2.9" transform="rotate(-25 11.4 19.6)" fill="#4d9cb1"/><path d="M14.8 7 C18.5 8.5 21.5 11 20.8 15.5" fill="none" stroke="#4d9cb1" stroke-width="2.6" stroke-linecap="round"/></svg>
<div class="t" style="left:335.49px;top:822px;font-size:23px;line-height:23px;font-weight:400;color:#16657a;letter-spacing:0.5px;transform:scaleX(1.0033);transform-origin:0 0;-webkit-text-stroke:0.25px currentColor;">Music</div>
<div class="t" style="left:429.50px;top:822px;font-size:23px;line-height:23px;font-weight:400;color:#000;letter-spacing:0.5px;-webkit-text-stroke:0.25px currentColor;">Andreas Vey</div>
<svg class="a" style="left:769px;top:818px;" width="30" height="30" viewBox="0 0 30 30"><circle cx="15" cy="15" r="15" fill="#ddd"/><rect x="13" y="7.5" width="4" height="10" fill="#fff"/><circle cx="15" cy="21.5" r="2.3" fill="#fff"/></svg>
<svg class="a" style="left:809px;top:818px;" width="30" height="30" viewBox="0 0 30 30"><circle cx="15" cy="15" r="13.7" fill="#fff" stroke="#5fae5f" stroke-width="2.5"/><path d="M10 9.8 A7.6 7.6 0 1 0 20 9.8" fill="none" stroke="#4a9e4a" stroke-width="2.5"/><line x1="15" y1="6.2" x2="15" y2="15" stroke="#4a9e4a" stroke-width="2.5"/></svg>
<div class="a" style="left:849px;top:818px;width:30px;height:30px;border-radius:50%;background:radial-gradient(circle at 50% 50%,#fff 0,#fff 6.5px,transparent 7.5px),linear-gradient(to bottom,#78c9dc,#4795ab)"></div>
<div class="t" style="left:887.44px;top:822px;font-size:23px;line-height:23px;font-weight:400;color:#16657a;letter-spacing:0.5px;transform:scaleX(1.0291);transform-origin:0 0;-webkit-text-stroke:0.25px currentColor;">Fast Lane (Snippets)</div>
<div class="t" style="left:1341.96px;top:822px;font-size:23px;line-height:23px;font-weight:400;color:#000;letter-spacing:0.5px;transform:scaleX(1.0193);transform-origin:0 0;-webkit-text-stroke:0.25px currentColor;">Embassy of Music</div>
<div class="t" style="left:1773.50px;top:822px;font-size:23px;line-height:23px;font-weight:400;color:#000;letter-spacing:0.5px;transform:scaleX(1.0670);transform-origin:0 0;-webkit-text-stroke:0.25px currentColor;">4066004885889 (199109113756)</div>
<div class="t" style="left:2179.43px;top:822px;font-size:23px;line-height:23px;font-weight:400;color:#000;letter-spacing:0.5px;transform:scaleX(1.0333);transform-origin:0 0;-webkit-text-stroke:0.25px currentColor;">Done</div>
<div class="t" style="left:2301.43px;top:822px;font-size:23px;line-height:23px;font-weight:400;color:#000;letter-spacing:0.5px;transform:scaleX(1.0663);transform-origin:0 0;-webkit-text-stroke:0.25px currentColor;">20250815</div>
<div class="t" style="left:2519.43px;top:822px;font-size:23px;line-height:23px;font-weight:400;color:#000;letter-spacing:0.5px;transform:scaleX(1.0663);transform-origin:0 0;-webkit-text-stroke:0.25px currentColor;">20250815</div>
<svg class="a" style="left:2824px;top:818px;" width="30" height="30" viewBox="0 0 30 30"><circle cx="15" cy="15" r="14.9" fill="#aaa"/><path d="M9 6.9 H16.6 L21.1 11.4 V23.1 H9 Z" fill="none" stroke="#eee" stroke-width="2.2" stroke-linejoin="miter"/><path d="M15.6 7 V12.4 H21" fill="none" stroke="#eee" stroke-width="2"/></svg>
<div class="a" style="left:0px;top:942px;width:2988px;height:2px;background:#ccc"></div>
<div class="a" style="left:40px;top:964px;width:30px;height:30px;border-radius:50%;background:linear-gradient(to bottom,#7dd0e4,#3f92a8)"></div>
<svg class="a" style="left:40px;top:964px;" width="30" height="30" viewBox="0 0 30 30"><path d="M12 7 H18 V14 H22.5 L15 22.5 L7.5 14 H12 Z" fill="#fff"/></svg>
<div class="t" style="left:79.96px;top:968px;font-size:23px;line-height:23px;font-weight:400;color:#16657a;letter-spacing:0.5px;transform:scaleX(0.9362);transform-origin:0 0;-webkit-text-stroke:0.25px currentColor;">CSV</div>
<div class="a" style="left:163px;top:964px;width:104px;height:84px;border:2px solid #ccc;background:#fff"></div>
<svg class="a" style="left:165px;top:978px;" width="100" height="56" viewBox="0 0 100 56"><defs><filter id="bl3" x="-10%" y="-10%" width="120%" height="120%"><feGaussianBlur stdDeviation="1.3"/></filter></defs><rect width="100" height="56" fill="#040605"/><g filter="url(#bl3)"><rect x="0" y="0" width="17" height="56" fill="#4f6a3c"/><rect x="5" y="0" width="3.5" height="56" fill="#a8c090"/><rect x="17" y="0" width="6" height="56" fill="#1a2a1a"/><ellipse cx="45" cy="24" rx="12" ry="15" fill="#1a120a"/><ellipse cx="46" cy="25" rx="8" ry="11" fill="#d8a880"/><ellipse cx="44" cy="21" rx="1.5" ry="1.2" fill="#5a3020"/><path d="M28 56 L32 44 L42 39 L50 42 L62 40 L68 48 L70 56 Z" fill="#a0b890"/><rect x="44" y="40" width="4" height="16" fill="#2a2010"/></g></svg>
<svg class="a" style="left:297px;top:964px;" width="30" height="30" viewBox="0 0 30 30"><circle cx="15" cy="15" r="13.9" fill="#fff" stroke="#4d9cb1" stroke-width="2.2" opacity="0.95"/><rect x="7.7" y="8" width="14.2" height="13.9" fill="#4d9cb1"/><rect x="11.9" y="10" width="1.9" height="2" fill="#fff"/><rect x="15.8" y="10" width="2.1" height="2" fill="#fff"/><rect x="11.9" y="18" width="1.9" height="1.9" fill="#fff"/><rect x="15.8" y="18" width="2.1" height="1.9" fill="#fff"/><rect x="7.7" y="10" width="1.8" height="2" fill="#fff"/><rect x="19.9" y="10" width="2" height="2" fill="#fff"/><rect x="7.7" y="18" width="1.8" height="1.9" fill="#fff"/><rect x="19.9" y="18" width="2" height="1.9" fill="#fff"/><rect x="7.7" y="9.7" width="14.2" height="0.3" fill="#fff"/></svg>
<div class="t" style="left:337.50px;top:968px;font-size:23px;line-height:23px;font-weight:400;color:#16657a;letter-spacing:0.5px;transform:scaleX(0.9967);transform-origin:0 0;-webkit-text-stroke:0.25px currentColor;">Video</div>
<div class="t" style="left:427.46px;top:968px;font-size:23px;line-height:23px;font-weight:400;color:#000;letter-spacing:0.5px;transform:scaleX(1.0216);transform-origin:0 0;-webkit-text-stroke:0.25px currentColor;">Marie Bothmer</div>
<svg class="a" style="left:769px;top:964px;" width="30" height="30" viewBox="0 0 30 30"><circle cx="15" cy="15" r="15" fill="#ddd"/><rect x="13" y="7.5" width="4" height="10" fill="#fff"/><circle cx="15" cy="21.5" r="2.3" fill="#fff"/></svg>
<svg class="a" style="left:809px;top:964px;" width="30" height="30" viewBox="0 0 30 30"><circle cx="15" cy="15" r="13.7" fill="#fff" stroke="#5fae5f" stroke-width="2.5"/><path d="M10 9.8 A7.6 7.6 0 1 0 20 9.8" fill="none" stroke="#4a9e4a" stroke-width="2.5"/><line x1="15" y1="6.2" x2="15" y2="15" stroke="#4a9e4a" stroke-width="2.5"/></svg>
<div class="a" style="left:849px;top:964px;width:30px;height:30px;border-radius:50%;background:radial-gradient(circle at 50% 50%,#fff 0,#fff 6.5px,transparent 7.5px),linear-gradient(to bottom,#78c9dc,#4795ab)"></div>
<div class="t" style="left:889.50px;top:968px;font-size:23px;line-height:23px;font-weight:400;color:#16657a;letter-spacing:0.5px;transform:scaleX(1.0216);transform-origin:0 0;-webkit-text-stroke:0.25px currentColor;">Taxi Driver</div>
<div class="t" style="left:1341.96px;top:968px;font-size:23px;line-height:23px;font-weight:400;color:#000;letter-spacing:0.5px;transform:scaleX(1.0193);transform-origin:0 0;-webkit-text-stroke:0.25px currentColor;">Embassy of Music</div>
<div class="t" style="left:1773.50px;top:968px;font-size:23px;line-height:23px;font-weight:400;color:#000;letter-spacing:0.5px;transform:scaleX(1.0640);transform-origin:0 0;-webkit-text-stroke:0.25px currentColor;">4066004878515</div>
<div class="t" style="left:2179.43px;top:968px;font-size:23px;line-height:23px;font-weight:400;color:#000;letter-spacing:0.5px;transform:scaleX(1.0333);transform-origin:0 0;-webkit-text-stroke:0.25px currentColor;">Done</div>
<div class="t" style="left:2301.44px;top:968px;font-size:23px;line-height:23px;font-weight:400;color:#000;letter-spacing:0.5px;transform:scaleX(1.0640);transform-origin:0 0;-webkit-text-stroke:0.25px currentColor;">20250814</div>
<div class="t" style="left:2519.44px;top:968px;font-size:23px;line-height:23px;font-weight:400;color:#000;letter-spacing:0.5px;transform:scaleX(1.0640);transform-origin:0 0;-webkit-text-stroke:0.25px currentColor;">20250814</div>
<svg class="a" style="left:2824px;top:964px;" width="30" height="30" viewBox="0 0 30 30"><circle cx="15" cy="15" r="14.9" fill="#aaa"/><path d="M9 6.9 H16.6 L21.1 11.4 V23.1 H9 Z" fill="none" stroke="#eee" stroke-width="2.2" stroke-linejoin="miter"/><path d="M15.6 7 V12.4 H21" fill="none" stroke="#eee" stroke-width="2"/></svg>
<div class="a" style="left:0px;top:1068px;width:2988px;height:2px;background:#ccc"></div>
<div class="a" style="left:40px;top:1090px;width:30px;height:30px;border-radius:50%;background:linear-gradient(to bottom,#7dd0e4,#3f92a8)"></div>
<svg class="a" style="left:40px;top:1090px;" width="30" height="30" viewBox="0 0 30 30"><path d="M12 7 H18 V14 H22.5 L15 22.5 L7.5 14 H12 Z" fill="#fff"/></svg>
<div class="t" style="left:79.96px;top:1094px;font-size:23px;line-height:23px;font-weight:400;color:#16657a;letter-spacing:0.5px;transform:scaleX(0.9362);transform-origin:0 0;-webkit-text-stroke:0.25px currentColor;">CSV</div>
<div class="a" style="left:163px;top:1090px;width:104px;height:104px;border:2px solid #ccc;background:#fff"></div>
<svg class="a" style="left:165px;top:1092px;overflow:hidden;" width="100" height="100" viewBox="0 0 100 100"><defs><filter id="bl4" x="-10%" y="-10%" width="120%" height="120%"><feGaussianBlur stdDeviation="1.2"/></filter><radialGradient id="g4" cx="50%" cy="30%" r="80%"><stop offset="0" stop-color="#c80010"/><stop offset="0.6" stop-color="#a0000c"/><stop offset="1" stop-color="#3a0004"/></radialGradient></defs><rect width="100" height="100" fill="url(#g4)"/><g filter="url(#bl4)"><path d="M28 100 L30 55 L40 38 L60 38 L72 55 L78 100 Z" fill="#9a8070"/><path d="M36 86 L38 56 L50 50 L62 56 L66 86 Z" fill="#c8a020"/><ellipse cx="50" cy="26" rx="9" ry="11" fill="#2a0808"/><ellipse cx="50" cy="30" rx="6" ry="8" fill="#d8b0a0"/><rect x="2" y="50" width="4" height="28" fill="#f0d0d0"/><rect x="8" y="52" width="4" height="30" fill="#f8e0e0"/><rect x="82" y="40" width="3.5" height="28" fill="#f0d0d0"/><rect x="18" y="32" width="3" height="40" fill="#e84050"/><ellipse cx="50" cy="94" rx="26" ry="7" fill="#90d0c0"/><rect x="0" y="88" width="20" height="12" fill="#205030"/><ellipse cx="86" cy="82" rx="10" ry="8" fill="#804030"/></g></svg>
<svg class="a" style="left:297px;top:1090px;" width="30" height="30" viewBox="0 0 30 30"><circle cx="15" cy="15" r="13.9" fill="#fff" stroke="#4d9cb1" stroke-width="2.2" opacity="0.95"/><rect x="13.6" y="6.5" width="2.3" height="13" fill="#4d9cb1"/><ellipse cx="11.4" cy="19.6" rx="4.1" ry="2.9" transform="rotate(-25 11.4 19.6)" fill="#4d9cb1"/><path d="M14.8 7 C18.5 8.5 21.5 11 20.8 15.5" fill="none" stroke="#4d9cb1" stroke-width="2.6" stroke-linecap="round"/></svg>
<div class="t" style="left:335.49px;top:1094px;font-size:23px;line-height:23px;font-weight:400;color:#16657a;letter-spacing:0.5px;transform:scaleX(1.0033);transform-origin:0 0;-webkit-text-stroke:0.25px currentColor;">Music</div>
<div class="t" style="left:429.50px;top:1094px;font-size:23px;line-height:23px;font-weight:400;color:#000;letter-spacing:0.5px;transform:scaleX(1.0216);transform-origin:0 0;-webkit-text-stroke:0.25px currentColor;">Victoria West</div>
<svg class="a" style="left:769px;top:1090px;" width="30" height="30" viewBox="0 0 30 30"><circle cx="15" cy="15" r="15" fill="#ddd"/><rect x="13" y="7.5" width="4" height="10" fill="#fff"/><circle cx="15" cy="21.5" r="2.3" fill="#fff"/></svg>
<svg class="a" style="left:809px;top:1090px;" width="30" height="30" viewBox="0 0 30 30"><circle cx="15" cy="15" r="13.7" fill="#fff" stroke="#5fae5f" stroke-width="2.5"/><path d="M10 9.8 A7.6 7.6 0 1 0 20 9.8" fill="none" stroke="#4a9e4a" stroke-width="2.5"/><line x1="15" y1="6.2" x2="15" y2="15" stroke="#4a9e4a" stroke-width="2.5"/></svg>
<div class="a" style="left:849px;top:1090px;width:30px;height:30px;border-radius:50%;background:radial-gradient(circle at 50% 50%,#fff 0,#fff 6.5px,transparent 7.5px),linear-gradient(to bottom,#78c9dc,#4795ab)"></div>
<div class="t" style="left:887.46px;top:1094px;font-size:23px;line-height:23px;font-weight:400;color:#16657a;letter-spacing:0.5px;transform:scaleX(1.0216);transform-origin:0 0;-webkit-text-stroke:0.25px currentColor;">Maybe Tonight</div>
<div class="t" style="left:1341.96px;top:1094px;font-size:23px;line-height:23px;font-weight:400;color:#000;letter-spacing:0.5px;transform:scaleX(1.0193);transform-origin:0 0;-webkit-text-stroke:0.25px currentColor;">Embassy of Music</div>
<div class="t" style="left:1773.50px;top:1094px;font-size:23px;line-height:23px;font-weight:400;color:#000;letter-spacing:0.5px;transform:scaleX(1.0640);transform-origin:0 0;-webkit-text-stroke:0.25px currentColor;">4066004874104 (199109092952)</div>
<div class="t" style="left:2179.43px;top:1094px;font-size:23px;line-height:23px;font-weight:400;color:#000;letter-spacing:0.5px;transform:scaleX(1.0333);transform-origin:0 0;-webkit-text-stroke:0.25px currentColor;">Done</div>
<div class="t" style="left:2301.44px;top:1094px;font-size:23px;line-height:23px;font-weight:400;color:#000;letter-spacing:0.5px;transform:scaleX(1.0640);transform-origin:0 0;-webkit-text-stroke:0.25px currentColor;">20250808</div>
<div class="t" style="left:2519.44px;top:1094px;font-size:23px;line-height:23px;font-weight:400;color:#000;letter-spacing:0.5px;transform:scaleX(1.0640);transform-origin:0 0;-webkit-text-stroke:0.25px currentColor;">20250709</div>
<svg class="a" style="left:2824px;top:1090px;" width="30" height="30" viewBox="0 0 30 30"><circle cx="15" cy="15" r="14.9" fill="#aaa"/><path d="M9 6.9 H16.6 L21.1 11.4 V23.1 H9 Z" fill="none" stroke="#eee" stroke-width="2.2" stroke-linejoin="miter"/><path d="M15.6 7 V12.4 H21" fill="none" stroke="#eee" stroke-width="2"/></svg>
<div class="a" style="left:0px;top:1214px;width:2988px;height:2px;background:#ccc"></div>
<div class="a" style="left:40px;top:1236px;width:30px;height:30px;border-radius:50%;background:linear-gradient(to bottom,#7dd0e4,#3f92a8)"></div>
<svg class="a" style="left:40px;top:1236px;" width="30" height="30" viewBox="0 0 30 30"><path d="M12 7 H18 V14 H22.5 L15 22.5 L7.5 14 H12 Z" fill="#fff"/></svg>
<div class="t" style="left:79.96px;top:1240px;font-size:23px;line-height:23px;font-weight:400;color:#16657a;letter-spacing:0.5px;transform:scaleX(0.9362);transform-origin:0 0;-webkit-text-stroke:0.25px currentColor;">CSV</div>
<div class="a" style="left:163px;top:1236px;width:104px;height:104px;border:2px solid #ccc;background:#fff"></div>
<svg class="a" style="left:165px;top:1238px;overflow:hidden;" width="100" height="100" viewBox="0 0 100 100"><defs><filter id="bl5" x="-10%" y="-10%" width="120%" height="120%"><feGaussianBlur stdDeviation="1.5"/></filter><linearGradient id="g5" x1="0" y1="0" x2="1" y2="0.3"><stop offset="0" stop-color="#0e1606"/><stop offset="0.5" stop-color="#2a2a0a"/><stop offset="1" stop-color="#5a3806"/></linearGradient></defs><rect width="100" height="100" fill="url(#g5)"/><g filter="url(#bl5)"><polygon points="94,12 100,8 98,70 64,62 56,48" fill="#7a6c34"/><ellipse cx="40" cy="40" rx="12" ry="14" fill="#1a3208" opacity="0.8"/><path d="M22 52 L42 50 L44 68 L58 68 L62 90 L26 90 Z" fill="#3e4a12"/><rect x="40" y="48" width="5" height="26" fill="#0a0604"/><rect x="64" y="62" width="24" height="34" fill="#3a1e08"/><rect x="0" y="90" width="100" height="10" fill="#1a0e04"/><ellipse cx="90" cy="96" rx="12" ry="5" fill="#a06a10"/></g></svg>
<svg class="a" style="left:297px;top:1236px;" width="30" height="30" viewBox="0 0 30 30"><circle cx="15" cy="15" r="13.9" fill="#fff" stroke="#4d9cb1" stroke-width="2.2" opacity="0.95"/><rect x="13.6" y="6.5" width="2.3" height="13" fill="#4d9cb1"/><ellipse cx="11.4" cy="19.6" rx="4.1" ry="2.9" transform="rotate(-25 11.4 19.6)" fill="#4d9cb1"/><path d="M14.8 7 C18.5 8.5 21.5 11 20.8 15.5" fill="none" stroke="#4d9cb1" stroke-width="2.6" stroke-linecap="round"/></svg>
<div class="t" style="left:335.49px;top:1240px;font-size:23px;line-height:23px;font-weight:400;color:#16657a;letter-spacing:0.5px;transform:scaleX(1.0033);transform-origin:0 0;-webkit-text-stroke:0.25px currentColor;">Music</div>
<div class="t" style="left:427.46px;top:1240px;font-size:23px;line-height:23px;font-weight:400;color:#000;letter-spacing:0.5px;transform:scaleX(1.0216);transform-origin:0 0;-webkit-text-stroke:0.25px currentColor;">KADR</div>
<svg class="a" style="left:769px;top:1236px;" width="30" height="30" viewBox="0 0 30 30"><circle cx="15" cy="15" r="13.3" fill="#fff" stroke="#5aa3b8" stroke-width="2.4"/><rect x="13" y="7.5" width="4" height="10" fill="#4f98ad"/><circle cx="15" cy="21.5" r="2.3" fill="#4f98ad"/></svg>
<svg class="a" style="left:809px;top:1236px;" width="30" height="30" viewBox="0 0 30 30"><circle cx="15" cy="15" r="13.7" fill="#fff" stroke="#5fae5f" stroke-width="2.5"/><path d="M10 9.8 A7.6 7.6 0 1 0 20 9.8" fill="none" stroke="#4a9e4a" stroke-width="2.5"/><line x1="15" y1="6.2" x2="15" y2="15" stroke="#4a9e4a" stroke-width="2.5"/></svg>
<div class="a" style="left:849px;top:1236px;width:30px;height:30px;border-radius:50%;background:radial-gradient(circle at 50% 50%,#fff 0,#fff 6.5px,transparent 7.5px),linear-gradient(to bottom,#78c9dc,#4795ab)"></div>
<div class="t" style="left:888.48px;top:1240px;font-size:23px;line-height:23px;font-weight:400;color:#16657a;letter-spacing:0.5px;transform:scaleX(1.0216);transform-origin:0 0;-webkit-text-stroke:0.25px currentColor;">Sen Suskun</div>
<div class="t" style="left:1341.96px;top:1240px;font-size:23px;line-height:23px;font-weight:400;color:#000;letter-spacing:0.5px;transform:scaleX(1.0193);transform-origin:0 0;-webkit-text-stroke:0.25px currentColor;">Embassy of Music</div>
<div class="t" style="left:1773.50px;top:1240px;font-size:23px;line-height:23px;font-weight:400;color:#000;letter-spacing:0.5px;transform:scaleX(1.0640);transform-origin:0 0;-webkit-text-stroke:0.25px currentColor;">4066004878287 (199109100688)</div>
<div class="t" style="left:2179.43px;top:1240px;font-size:23px;line-height:23px;font-weight:400;color:#000;letter-spacing:0.5px;transform:scaleX(1.0333);transform-origin:0 0;-webkit-text-stroke:0.25px currentColor;">Done</div>
<div class="t" style="left:2301.44px;top:1240px;font-size:23px;line-height:23px;font-weight:400;color:#000;letter-spacing:0.5px;transform:scaleX(1.0640);transform-origin:0 0;-webkit-text-stroke:0.25px currentColor;">20250808</div>
<div class="t" style="left:2519.44px;top:1240px;font-size:23px;line-height:23px;font-weight:400;color:#000;letter-spacing:0.5px;transform:scaleX(1.0640);transform-origin:0 0;-webkit-text-stroke:0.25px currentColor;">20250730</div>
<svg class="a" style="left:2824px;top:1236px;" width="30" height="30" viewBox="0 0 30 30"><circle cx="15" cy="15" r="14.9" fill="#aaa"/><path d="M9 6.9 H16.6 L21.1 11.4 V23.1 H9 Z" fill="none" stroke="#eee" stroke-width="2.2" stroke-linejoin="miter"/><path d="M15.6 7 V12.4 H21" fill="none" stroke="#eee" stroke-width="2"/></svg>
<div class="a" style="left:0px;top:1360px;width:2988px;height:2px;background:#ccc"></div>
<div class="a" style="left:40px;top:1382px;width:30px;height:30px;border-radius:50%;background:linear-gradient(to bottom,#7dd0e4,#3f92a8)"></div>
<svg class="a" style="left:40px;top:1382px;" width="30" height="30" viewBox="0 0 30 30"><path d="M12 7 H18 V14 H22.5 L15 22.5 L7.5 14 H12 Z" fill="#fff"/></svg>
<div class="t" style="left:79.96px;top:1386px;font-size:23px;line-height:23px;font-weight:400;color:#16657a;letter-spacing:0.5px;transform:scaleX(0.9362);transform-origin:0 0;-webkit-text-stroke:0.25px currentColor;">CSV</div>
<div class="a" style="left:163px;top:1382px;width:104px;height:84px;border:2px solid #ccc;background:#fff"></div>
<svg class="a" style="left:165px;top:1396px;" width="100" height="56" viewBox="0 0 100 56"><defs><filter id="bl6" x="-10%" y="-10%" width="120%" height="120%"><feGaussianBlur stdDeviation="0.8"/></filter></defs><rect width="100" height="56" fill="#000"/><circle cx="50" cy="28" r="53" fill="#ddd6d6"/><g filter="url(#bl6)"><circle cx="49.3" cy="27.8" r="20" fill="#d8dede" stroke="#98a8a8" stroke-width="1.6"/><circle cx="49.3" cy="27.8" r="12" fill="#f0c8c8"/><circle cx="49.3" cy="27.8" r="7" fill="#f05a5a"/><circle cx="73.5" cy="4" r="4" fill="#c05048"/><circle cx="83" cy="22" r="4.5" fill="#b85850"/><ellipse cx="20" cy="11" rx="4" ry="3" fill="#8a6a60"/><ellipse cx="16" cy="30" rx="5" ry="2.5" fill="#9a7a70"/><ellipse cx="80" cy="42" rx="4" ry="2" fill="#8a7a70"/><rect x="0" y="26.5" width="8" height="3" fill="#303030"/><rect x="92" y="26.5" width="8" height="3" fill="#303848"/></g></svg>
<svg class="a" style="left:297px;top:1382px;" width="30" height="30" viewBox="0 0 30 30"><circle cx="15" cy="15" r="13.9" fill="#fff" stroke="#4d9cb1" stroke-width="2.2" opacity="0.95"/><rect x="7.7" y="8" width="14.2" height="13.9" fill="#4d9cb1"/><rect x="11.9" y="10" width="1.9" height="2" fill="#fff"/><rect x="15.8" y="10" width="2.1" height="2" fill="#fff"/><rect x="11.9" y="18" width="1.9" height="1.9" fill="#fff"/><rect x="15.8" y="18" width="2.1" height="1.9" fill="#fff"/><rect x="7.7" y="10" width="1.8" height="2" fill="#fff"/><rect x="19.9" y="10" width="2" height="2" fill="#fff"/><rect x="7.7" y="18" width="1.8" height="1.9" fill="#fff"/><rect x="19.9" y="18" width="2" height="1.9" fill="#fff"/><rect x="7.7" y="9.7" width="14.2" height="0.3" fill="#fff"/></svg>
<div class="t" style="left:337.50px;top:1386px;font-size:23px;line-height:23px;font-weight:400;color:#16657a;letter-spacing:0.5px;transform:scaleX(0.9967);transform-origin:0 0;-webkit-text-stroke:0.25px currentColor;">Video</div>
<div class="t" style="left:427.46px;top:1386px;font-size:23px;line-height:23px;font-weight:400;color:#000;letter-spacing:0.5px;transform:scaleX(1.0216);transform-origin:0 0;-webkit-text-stroke:0.25px currentColor;">Monolink</div>
<svg class="a" style="left:769px;top:1382px;" width="30" height="30" viewBox="0 0 30 30"><circle cx="15" cy="15" r="15" fill="#ddd"/><rect x="13" y="7.5" width="4" height="10" fill="#fff"/><circle cx="15" cy="21.5" r="2.3" fill="#fff"/></svg>
<svg class="a" style="left:809px;top:1382px;" width="30" height="30" viewBox="0 0 30 30"><circle cx="15" cy="15" r="13.7" fill="#fff" stroke="#5fae5f" stroke-width="2.5"/><path d="M10 9.8 A7.6 7.6 0 1 0 20 9.8" fill="none" stroke="#4a9e4a" stroke-width="2.5"/><line x1="15" y1="6.2" x2="15" y2="15" stroke="#4a9e4a" stroke-width="2.5"/></svg>
<div class="a" style="left:849px;top:1382px;width:30px;height:30px;border-radius:50%;background:radial-gradient(circle at 50% 50%,#fff 0,#fff 6.5px,transparent 7.5px),linear-gradient(to bottom,#78c9dc,#4795ab)"></div>
<div class="t" style="left:887.46px;top:1386px;font-size:23px;line-height:23px;font-weight:400;color:#16657a;letter-spacing:0.5px;transform:scaleX(1.0216);transform-origin:0 0;-webkit-text-stroke:0.25px currentColor;">In My Place</div>
<div class="t" style="left:1341.96px;top:1386px;font-size:23px;line-height:23px;font-weight:400;color:#000;letter-spacing:0.5px;transform:scaleX(1.0193);transform-origin:0 0;-webkit-text-stroke:0.25px currentColor;">Embassy of Music</div>
<div class="t" style="left:1773.50px;top:1386px;font-size:23px;line-height:23px;font-weight:400;color:#000;letter-spacing:0.5px;transform:scaleX(1.0640);transform-origin:0 0;-webkit-text-stroke:0.25px currentColor;">4066004878430</div>
<div class="t" style="left:2179.43px;top:1386px;font-size:23px;line-height:23px;font-weight:400;color:#000;letter-spacing:0.5px;transform:scaleX(1.0333);transform-origin:0 0;-webkit-text-stroke:0.25px currentColor;">Done</div>
<div class="t" style="left:2301.44px;top:1386px;font-size:23px;line-height:23px;font-weight:400;color:#000;letter-spacing:0.5px;transform:scaleX(1.0640);transform-origin:0 0;-webkit-text-stroke:0.25px currentColor;">20250807</div>
<div class="t" style="left:2519.44px;top:1386px;font-size:23px;line-height:23px;font-weight:400;color:#000;letter-spacing:0.5px;transform:scaleX(1.0640);transform-origin:0 0;-webkit-text-stroke:0.25px currentColor;">20250804</div>
<svg class="a" style="left:2824px;top:1382px;" width="30" height="30" viewBox="0 0 30 30"><circle cx="15" cy="15" r="14.9" fill="#aaa"/><path d="M9 6.9 H16.6 L21.1 11.4 V23.1 H9 Z" fill="none" stroke="#eee" stroke-width="2.2" stroke-linejoin="miter"/><path d="M15.6 7 V12.4 H21" fill="none" stroke="#eee" stroke-width="2"/></svg>
<div class="a" style="left:0px;top:1486px;width:2988px;height:2px;background:#ccc"></div>
<div class="a" style="left:40px;top:1508px;width:30px;height:30px;border-radius:50%;background:linear-gradient(to bottom,#7dd0e4,#3f92a8)"></div>
<svg class="a" style="left:40px;top:1508px;" width="30" height="30" viewBox="0 0 30 30"><path d="M12 7 H18 V14 H22.5 L15 22.5 L7.5 14 H12 Z" fill="#fff"/></svg>
<div class="t" style="left:79.96px;top:1512px;font-size:23px;line-height:23px;font-weight:400;color:#16657a;letter-spacing:0.5px;transform:scaleX(0.9362);transform-origin:0 0;-webkit-text-stroke:0.25px currentColor;">CSV</div>
<div class="a" style="left:163px;top:1508px;width:104px;height:104px;border:2px solid #ccc;background:#fff"></div>
<svg class="a" style="left:165px;top:1510px;overflow:hidden;" width="100" height="100" viewBox="0 0 100 100"><defs><filter id="bl7" x="-10%" y="-10%" width="120%" height="120%"><feGaussianBlur stdDeviation="1.0"/></filter><linearGradient id="g7" x1="0" y1="0" x2="0" y2="1"><stop offset="0" stop-color="#b8ccd0"/><stop offset="1" stop-color="#78aaa0"/></linearGradient></defs><rect width="100" height="100" fill="url(#g7)"/><g filter="url(#bl7)"><path d="M56 0 L100 0 L100 100 L42 100 L36 56 L40 30 Z" fill="#7a7040"/><ellipse cx="70" cy="40" rx="10" ry="8" fill="#a89a60" opacity="0.7"/><ellipse cx="82" cy="70" rx="9" ry="10" fill="#5a5a28" opacity="0.8"/><ellipse cx="60" cy="80" rx="8" ry="9" fill="#a08a60" opacity="0.6"/><ellipse cx="90" cy="20" rx="8" ry="8" fill="#8a8040" opacity="0.7"/><circle cx="17.6" cy="20" r="13" fill="#4a4a30"/><rect x="11" y="15" width="13" height="9" fill="#d8c8e0"/><rect x="8" y="72" width="26" height="3" fill="#203030"/><rect x="8" y="77" width="20" height="3" fill="#304040"/><rect x="8" y="86" width="16" height="3" fill="#203030"/><rect x="8" y="90" width="20" height="3" fill="#203030"/></g></svg>
<svg class="a" style="left:297px;top:1508px;" width="30" height="30" viewBox="0 0 30 30"><circle cx="15" cy="15" r="13.9" fill="#fff" stroke="#4d9cb1" stroke-width="2.2" opacity="0.95"/><rect x="13.6" y="6.5" width="2.3" height="13" fill="#4d9cb1"/><ellipse cx="11.4" cy="19.6" rx="4.1" ry="2.9" transform="rotate(-25 11.4 19.6)" fill="#4d9cb1"/><path d="M14.8 7 C18.5 8.5 21.5 11 20.8 15.5" fill="none" stroke="#4d9cb1" stroke-width="2.6" stroke-linecap="round"/></svg>
<div class="t" style="left:335.49px;top:1512px;font-size:23px;line-height:23px;font-weight:400;color:#16657a;letter-spacing:0.5px;transform:scaleX(1.0033);transform-origin:0 0;-webkit-text-stroke:0.25px currentColor;">Music</div>
<div class="t" style="left:427.46px;top:1512px;font-size:23px;line-height:23px;font-weight:400;color:#000;letter-spacing:0.5px;transform:scaleX(1.0216);transform-origin:0 0;-webkit-text-stroke:0.25px currentColor;">Kingston Sound System,</div>
<div class="t" style="left:429.50px;top:1540px;font-size:23px;line-height:23px;font-weight:400;color:#000;letter-spacing:0.5px;transform:scaleX(1.0216);transform-origin:0 0;-webkit-text-stroke:0.25px currentColor;">Tanita Tikaram</div>
<svg class="a" style="left:769px;top:1508px;" width="30" height="30" viewBox="0 0 30 30"><circle cx="15" cy="15" r="15" fill="#ddd"/><rect x="13" y="7.5" width="4" height="10" fill="#fff"/><circle cx="15" cy="21.5" r="2.3" fill="#fff"/></svg>
<svg class="a" style="left:809px;top:1508px;" width="30" height="30" viewBox="0 0 30 30"><circle cx="15" cy="15" r="13.7" fill="#fff" stroke="#5fae5f" stroke-width="2.5"/><path d="M10 9.8 A7.6 7.6 0 1 0 20 9.8" fill="none" stroke="#4a9e4a" stroke-width="2.5"/><line x1="15" y1="6.2" x2="15" y2="15" stroke="#4a9e4a" stroke-width="2.5"/></svg>
<div class="a" style="left:849px;top:1508px;width:30px;height:30px;border-radius:50%;background:radial-gradient(circle at 50% 50%,#fff 0,#fff 6.5px,transparent 7.5px),linear-gradient(to bottom,#78c9dc,#4795ab)"></div>
<div class="t" style="left:889.50px;top:1512px;font-size:23px;line-height:23px;font-weight:400;color:#16657a;letter-spacing:0.5px;transform:scaleX(1.0216);transform-origin:0 0;-webkit-text-stroke:0.25px currentColor;">Twist In My Sobriety</div>
<div class="t" style="left:1341.96px;top:1512px;font-size:23px;line-height:23px;font-weight:400;color:#000;letter-spacing:0.5px;transform:scaleX(1.0193);transform-origin:0 0;-webkit-text-stroke:0.25px currentColor;">Embassy of Music</div>
<div class="t" style="left:1773.50px;top:1512px;font-size:23px;line-height:23px;font-weight:400;color:#000;letter-spacing:0.5px;transform:scaleX(1.0640);transform-origin:0 0;-webkit-text-stroke:0.25px currentColor;">4066004845999 (199109093652)</div>
<div class="t" style="left:2179.43px;top:1512px;font-size:23px;line-height:23px;font-weight:400;color:#000;letter-spacing:0.5px;transform:scaleX(1.0333);transform-origin:0 0;-webkit-text-stroke:0.25px currentColor;">Done</div>
<div class="t" style="left:2301.44px;top:1512px;font-size:23px;line-height:23px;font-weight:400;color:#000;letter-spacing:0.5px;transform:scaleX(1.0640);transform-origin:0 0;-webkit-text-stroke:0.25px currentColor;">20250806</div>
<div class="t" style="left:2519.44px;top:1512px;font-size:23px;line-height:23px;font-weight:400;color:#000;letter-spacing:0.5px;transform:scaleX(1.0640);transform-origin:0 0;-webkit-text-stroke:0.25px currentColor;">20250813</div>
<svg class="a" style="left:2824px;top:1508px;" width="30" height="30" viewBox="0 0 30 30"><circle cx="15" cy="15" r="14.9" fill="#aaa"/><path d="M9 6.9 H16.6 L21.1 11.4 V23.1 H9 Z" fill="none" stroke="#eee" stroke-width="2.2" stroke-linejoin="miter"/><path d="M15.6 7 V12.4 H21" fill="none" stroke="#eee" stroke-width="2"/></svg>
<div class="a" style="left:0px;top:1632px;width:2988px;height:2px;background:#ccc"></div>
<div class="a" style="left:40px;top:1654px;width:30px;height:30px;border-radius:50%;background:linear-gradient(to bottom,#7dd0e4,#3f92a8)"></div>
<svg class="a" style="left:40px;top:1654px;" width="30" height="30" viewBox="0 0 30 30"><path d="M12 7 H18 V14 H22.5 L15 22.5 L7.5 14 H12 Z" fill="#fff"/></svg>
<div class="t" style="left:79.96px;top:1658px;font-size:23px;line-height:23px;font-weight:400;color:#16657a;letter-spacing:0.5px;transform:scaleX(0.9362);transform-origin:0 0;-webkit-text-stroke:0.25px currentColor;">CSV</div>
<div class="a" style="left:163px;top:1654px;width:104px;height:104px;border:2px solid #ccc;background:#fff"></div>
<svg class="a" style="left:165px;top:1656px;overflow:hidden;" width="100" height="100" viewBox="0 0 100 100"><defs><filter id="bl8" x="-10%" y="-10%" width="120%" height="120%"><feGaussianBlur stdDeviation="0.9"/></filter><linearGradient id="g8" x1="0" y1="0" x2="1" y2="1"><stop offset="0" stop-color="#0a2a78"/><stop offset="1" stop-color="#1a5ac0"/></linearGradient></defs><rect width="100" height="100" fill="url(#g8)"/><g filter="url(#bl8)"><path d="M0 40 L100 18 L100 84 L0 82 Z" fill="#e6e2da"/><rect x="10" y="42" width="72" height="24" fill="#4a5258"/><rect x="14" y="46" width="26" height="14" fill="#7a9aa0"/><rect x="92" y="36" width="8" height="34" fill="#2a2a28"/><rect x="0" y="82" width="100" height="18" fill="#2a5a28"/><path d="M40 30 L56 28 L62 60 L64 96 L36 96 L38 60 Z" fill="#30b0a0"/><ellipse cx="50" cy="32" rx="5" ry="6" fill="#805840"/><path d="M4 34 Q30 20 52 22 Q80 14 100 6 L100 16 Q80 22 52 30 Q30 30 6 42 Z" fill="#c8f0f8" opacity="0.9"/></g></svg>
<svg class="a" style="left:297px;top:1654px;" width="30" height="30" viewBox="0 0 30 30"><circle cx="15" cy="15" r="13.9" fill="#fff" stroke="#4d9cb1" stroke-width="2.2" opacity="0.95"/><rect x="13.6" y="6.5" width="2.3" height="13" fill="#4d9cb1"/><ellipse cx="11.4" cy="19.6" rx="4.1" ry="2.9" transform="rotate(-25 11.4 19.6)" fill="#4d9cb1"/><path d="M14.8 7 C18.5 8.5 21.5 11 20.8 15.5" fill="none" stroke="#4d9cb1" stroke-width="2.6" stroke-linecap="round"/></svg>
<div class="t" style="left:335.49px;top:1658px;font-size:23px;line-height:23px;font-weight:400;color:#16657a;letter-spacing:0.5px;transform:scaleX(1.0033);transform-origin:0 0;-webkit-text-stroke:0.25px currentColor;">Music</div>
<div class="t" style="left:428.48px;top:1658px;font-size:23px;line-height:23px;font-weight:400;color:#000;letter-spacing:0.5px;transform:scaleX(1.0216);transform-origin:0 0;-webkit-text-stroke:0.25px currentColor;">Zymba, MONAMI</div>
<svg class="a" style="left:769px;top:1654px;" width="30" height="30" viewBox="0 0 30 30"><circle cx="15" cy="15" r="13.3" fill="#fff" stroke="#5aa3b8" stroke-width="2.4"/><rect x="13" y="7.5" width="4" height="10" fill="#4f98ad"/><circle cx="15" cy="21.5" r="2.3" fill="#4f98ad"/></svg>
<svg class="a" style="left:809px;top:1654px;" width="30" height="30" viewBox="0 0 30 30"><circle cx="15" cy="15" r="13.7" fill="#fff" stroke="#5fae5f" stroke-width="2.5"/><path d="M10 9.8 A7.6 7.6 0 1 0 20 9.8" fill="none" stroke="#4a9e4a" stroke-width="2.5"/><line x1="15" y1="6.2" x2="15" y2="15" stroke="#4a9e4a" stroke-width="2.5"/></svg>
<div class="a" style="left:849px;top:1654px;width:30px;height:30px;border-radius:50%;background:radial-gradient(circle at 50% 50%,#fff 0,#fff 6.5px,transparent 7.5px),linear-gradient(to bottom,#78c9dc,#4795ab)"></div>
<div class="t" style="left:887.46px;top:1658px;font-size:23px;line-height:23px;font-weight:400;color:#16657a;letter-spacing:0.5px;transform:scaleX(1.0216);transform-origin:0 0;-webkit-text-stroke:0.25px currentColor;">Big Stepper</div>
<div class="t" style="left:1341.96px;top:1658px;font-size:23px;line-height:23px;font-weight:400;color:#000;letter-spacing:0.5px;transform:scaleX(1.0193);transform-origin:0 0;-webkit-text-stroke:0.25px currentColor;">Embassy of Music</div>
<div class="t" style="left:1773.50px;top:1658px;font-size:23px;line-height:23px;font-weight:400;color:#000;letter-spacing:0.5px;transform:scaleX(1.0640);transform-origin:0 0;-webkit-text-stroke:0.25px currentColor;">4066004878447 (199109105935)</div>
<div class="t" style="left:2179.43px;top:1658px;font-size:23px;line-height:23px;font-weight:400;color:#000;letter-spacing:0.5px;transform:scaleX(1.0333);transform-origin:0 0;-webkit-text-stroke:0.25px currentColor;">Done</div>
<div class="t" style="left:2301.44px;top:1658px;font-size:23px;line-height:23px;font-weight:400;color:#000;letter-spacing:0.5px;transform:scaleX(1.0640);transform-origin:0 0;-webkit-text-stroke:0.25px currentColor;">20250806</div>
<div class="t" style="left:2519.44px;top:1658px;font-size:23px;line-height:23px;font-weight:400;color:#000;letter-spacing:0.5px;transform:scaleX(1.0640);transform-origin:0 0;-webkit-text-stroke:0.25px currentColor;">20250804</div>
<svg class="a" style="left:2824px;top:1654px;" width="30" height="30" viewBox="0 0 30 30"><circle cx="15" cy="15" r="14.9" fill="#aaa"/><path d="M9 6.9 H16.6 L21.1 11.4 V23.1 H9 Z" fill="none" stroke="#eee" stroke-width="2.2" stroke-linejoin="miter"/><path d="M15.6 7 V12.4 H21" fill="none" stroke="#eee" stroke-width="2"/></svg>
<div class="a" style="left:0px;top:1778px;width:2988px;height:2px;background:#ccc"></div>
<div class="a" style="left:40px;top:1800px;width:30px;height:30px;border-radius:50%;background:linear-gradient(to bottom,#7dd0e4,#3f92a8)"></div>
<svg class="a" style="left:40px;top:1800px;" width="30" height="30" viewBox="0 0 30 30"><path d="M12 7 H18 V14 H22.5 L15 22.5 L7.5 14 H12 Z" fill="#fff"/></svg>
<div class="t" style="left:79.96px;top:1804px;font-size:23px;line-height:23px;font-weight:400;color:#16657a;letter-spacing:0.5px;transform:scaleX(0.9362);transform-origin:0 0;-webkit-text-stroke:0.25px currentColor;">CSV</div>
<div class="a" style="left:163px;top:1800px;width:104px;height:104px;border:2px solid #ccc;background:#fff"></div>
<svg class="a" style="left:165px;top:1802px;overflow:hidden;" width="100" height="100" viewBox="0 0 100 100"><defs><filter id="bl9" x="-10%" y="-10%" width="120%" height="120%"><feGaussianBlur stdDeviation="1.2"/></filter></defs><rect width="100" height="100" fill="#b8bcc8"/><g filter="url(#bl9)"><path d="M0 2 L18 8 L48 15 L64 12 L80 16 L100 22 L100 30 L66 28 L50 40 L40 60 L0 60 Z" fill="#0e0e0e"/><path d="M50 28 L100 26 L100 60 L44 60 Z" fill="#9a7a70"/><ellipse cx="84" cy="37" rx="5" ry="7" fill="#301810"/><rect x="30" y="46" width="36" height="6" fill="#d0c8c0" opacity="0.7"/><rect x="0" y="60" width="100" height="40" fill="#0e0e0e"/></g></svg>
<svg class="a" style="left:297px;top:1800px;" width="30" height="30" viewBox="0 0 30 30"><circle cx="15" cy="15" r="13.9" fill="#fff" stroke="#4d9cb1" stroke-width="2.2" opacity="0.95"/><rect x="13.6" y="6.5" width="2.3" height="13" fill="#4d9cb1"/><ellipse cx="11.4" cy="19.6" rx="4.1" ry="2.9" transform="rotate(-25 11.4 19.6)" fill="#4d9cb1"/><path d="M14.8 7 C18.5 8.5 21.5 11 20.8 15.5" fill="none" stroke="#4d9cb1" stroke-width="2.6" stroke-linecap="round"/></svg>
<div class="t" style="left:335.49px;top:1804px;font-size:23px;line-height:23px;font-weight:400;color:#16657a;letter-spacing:0.5px;transform:scaleX(1.0033);transform-origin:0 0;-webkit-text-stroke:0.25px currentColor;">Music</div>
<div class="t" style="left:427.46px;top:1804px;font-size:23px;line-height:23px;font-weight:400;color:#000;letter-spacing:0.5px;transform:scaleX(1.0216);transform-origin:0 0;-webkit-text-stroke:0.25px currentColor;">Nico Suave, capelli</div>
<svg class="a" style="left:769px;top:1800px;" width="30" height="30" viewBox="0 0 30 30"><circle cx="15" cy="15" r="15" fill="#ddd"/><rect x="13" y="7.5" width="4" height="10" fill="#fff"/><circle cx="15" cy="21.5" r="2.3" fill="#fff"/></svg>
<svg class="a" style="left:809px;top:1800px;" width="30" height="30" viewBox="0 0 30 30"><circle cx="15" cy="15" r="13.7" fill="#fff" stroke="#5fae5f" stroke-width="2.5"/><path d="M10 9.8 A7.6 7.6 0 1 0 20 9.8" fill="none" stroke="#4a9e4a" stroke-width="2.5"/><line x1="15" y1="6.2" x2="15" y2="15" stroke="#4a9e4a" stroke-width="2.5"/></svg>
<div class="a" style="left:849px;top:1800px;width:30px;height:30px;border-radius:50%;background:radial-gradient(circle at 50% 50%,#fff 0,#fff 6.5px,transparent 7.5px),linear-gradient(to bottom,#78c9dc,#4795ab)"></div>
<div class="t" style="left:888.48px;top:1804px;font-size:23px;line-height:23px;font-weight:400;color:#16657a;letter-spacing:0.5px;transform:scaleX(1.0216);transform-origin:0 0;-webkit-text-stroke:0.25px currentColor;">SEKUNDE</div>
<div class="t" style="left:1341.96px;top:1804px;font-size:23px;line-height:23px;font-weight:400;color:#000;letter-spacing:0.5px;transform:scaleX(1.0193);transform-origin:0 0;-webkit-text-stroke:0.25px currentColor;">Embassy of Music</div>
<div class="t" style="left:1773.50px;top:1804px;font-size:23px;line-height:23px;font-weight:400;color:#000;letter-spacing:0.5px;transform:scaleX(1.0640);transform-origin:0 0;-webkit-text-stroke:0.25px currentColor;">4066004873862 (199109093829)</div>
<div class="t" style="left:2179.43px;top:1804px;font-size:23px;line-height:23px;font-weight:400;color:#000;letter-spacing:0.5px;transform:scaleX(1.0333);transform-origin:0 0;-webkit-text-stroke:0.25px currentColor;">Done</div>
<div class="t" style="left:2301.44px;top:1804px;font-size:23px;line-height:23px;font-weight:400;color:#000;letter-spacing:0.5px;transform:scaleX(1.0640);transform-origin:0 0;-webkit-text-stroke:0.25px currentColor;">20250801</div>
<div class="t" style="left:2519.44px;top:1804px;font-size:23px;line-height:23px;font-weight:400;color:#000;letter-spacing:0.5px;transform:scaleX(1.0640);transform-origin:0 0;-webkit-text-stroke:0.25px currentColor;">20250715</div>
<svg class="a" style="left:2824px;top:1800px;" width="30" height="30" viewBox="0 0 30 30"><circle cx="15" cy="15" r="14.9" fill="#aaa"/><path d="M9 6.9 H16.6 L21.1 11.4 V23.1 H9 Z" fill="none" stroke="#eee" stroke-width="2.2" stroke-linejoin="miter"/><path d="M15.6 7 V12.4 H21" fill="none" stroke="#eee" stroke-width="2"/></svg>
<div class="a" style="left:0px;top:1924px;width:2988px;height:2px;background:#ccc"></div></body></html>
